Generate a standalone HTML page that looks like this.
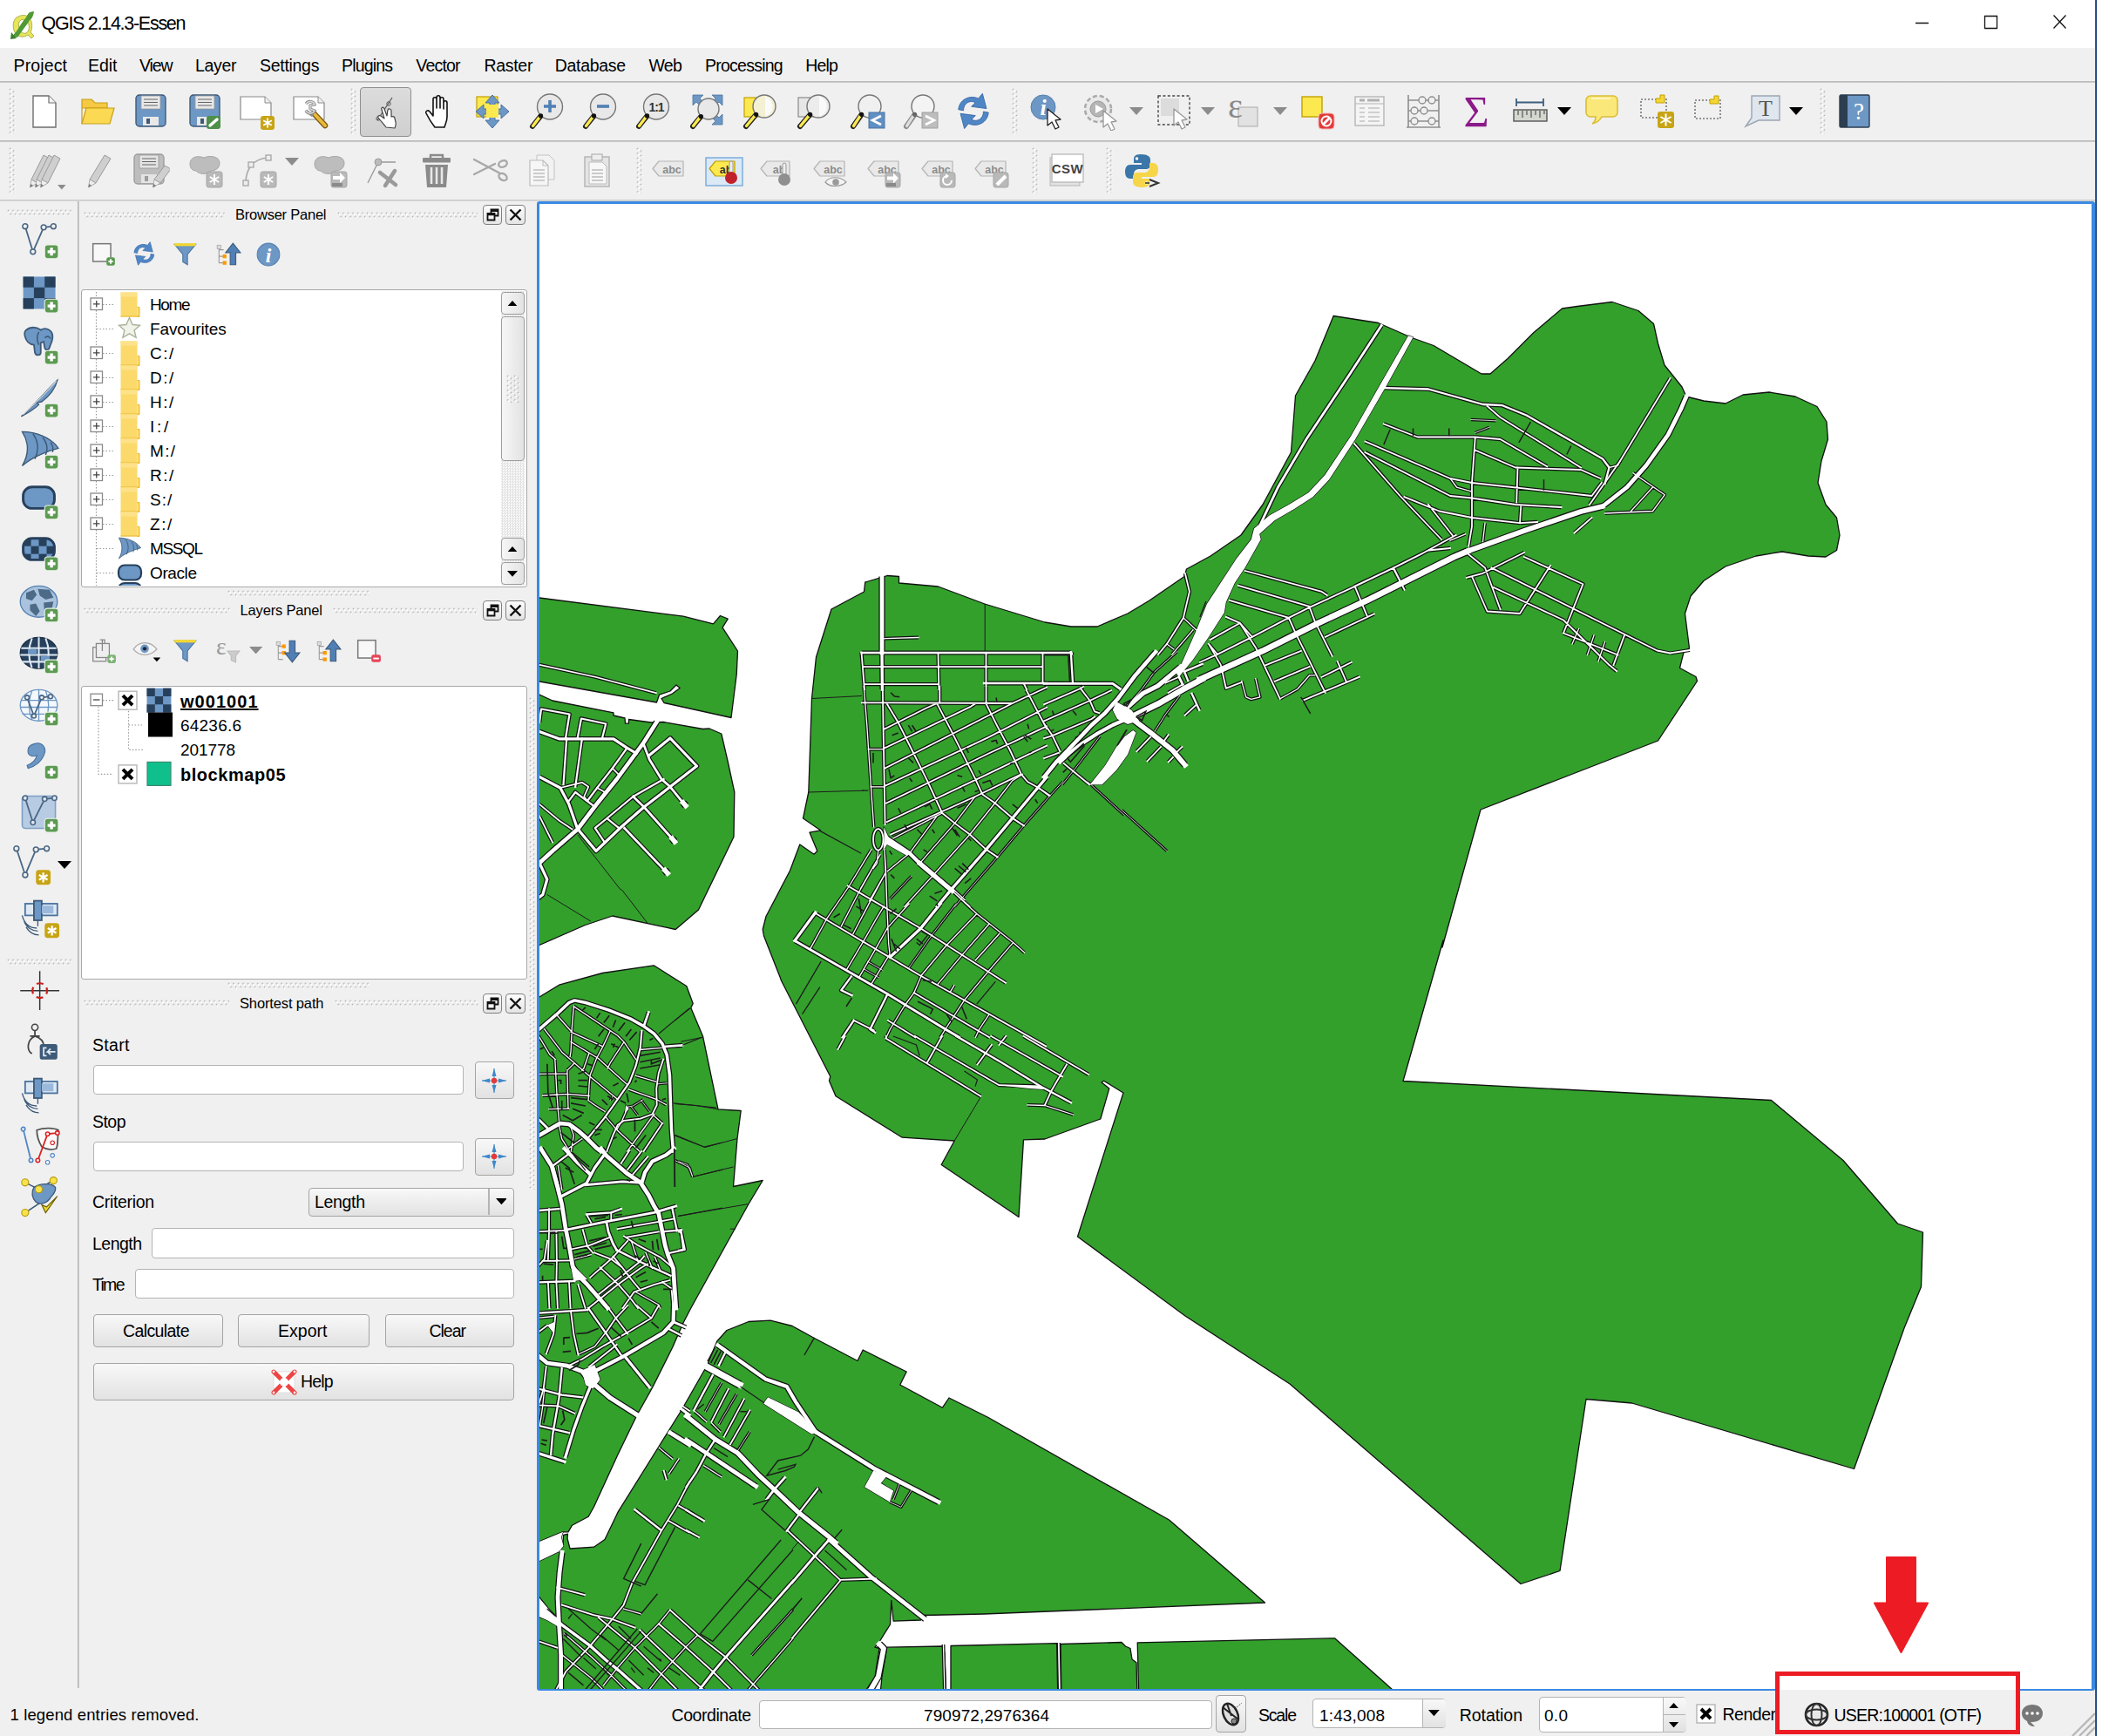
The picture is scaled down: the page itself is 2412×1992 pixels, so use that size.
<!DOCTYPE html>
<html><head><meta charset="utf-8"><title>QGIS 2.14.3-Essen</title><style>
html,body{margin:0;padding:0}
body{width:2412px;height:1992px;overflow:hidden;background:#fff;position:relative;font-family:"Liberation Sans",sans-serif;color:#000}
.t{position:absolute;white-space:nowrap}
.b{position:absolute}
.a{position:absolute;display:block}
.hv{position:absolute;width:8px;background:radial-gradient(circle at 2.6px 2.6px,#fff 0.9px,transparent 1.4px) 0 0/8px 5.5px,radial-gradient(circle at 6.6px 5.3px,#fff 0.9px,transparent 1.4px) 0 0/8px 5.5px,radial-gradient(circle at 1.8px 1.8px,#b4b4b4 1px,transparent 1.5px) 0 0/8px 5.5px,radial-gradient(circle at 5.8px 4.5px,#b4b4b4 1px,transparent 1.5px) 0 0/8px 5.5px}
.hh{position:absolute;height:8px;background:radial-gradient(circle at 2.6px 2.6px,#fff 0.9px,transparent 1.4px) 0 0/5.5px 8px,radial-gradient(circle at 5.3px 6.6px,#fff 0.9px,transparent 1.4px) 0 0/5.5px 8px,radial-gradient(circle at 1.8px 1.8px,#b4b4b4 1px,transparent 1.5px) 0 0/5.5px 8px,radial-gradient(circle at 4.5px 5.8px,#b4b4b4 1px,transparent 1.5px) 0 0/5.5px 8px}
#win{position:absolute;left:0;top:0;width:2404px;height:1992px;background:#f0f0f0}
#canvas{position:absolute;left:616px;top:230.8px;width:1788px;height:1709.4px;box-sizing:border-box;border:3.7px solid #3a8ae2;border-right-width:4.3px;border-bottom-width:2.8px;border-radius:3px;background:#fff;overflow:hidden}
#winedge{position:absolute;left:2403.5px;top:0;width:2px;height:1992px;background:linear-gradient(90deg,#2f6fc4,#0c2d5e)}
</style></head><body>
<div id="win"></div>
<div class="b" style="left:0.0px;top:0.0px;width:2404.0px;height:55.0px;background:#fff"></div>
<svg class="a" style="left:5.0px;top:5.0px" width="44.0" height="44.0" viewBox="-2 -2 44 44"><path d="M8 34L26 8l6 -1 -2 6L12 36z" fill="#5d9b3a"/><path d="M14 12c-6 2-8 12-3 20 4 4 10 4 14 1l4 4 3-3-4-4c3-6 2-14-3-18-3-2-7-2-11 0zm3 4c4-2 8 0 9 5 1 4 0 8-3 10-3 1-7-1-8-5-1-4-1-8 2-10z" fill="#e9e55a" stroke="#9aa03a" stroke-width=".8"/><path d="M9 33L27 7l5-1-2 6L13 36z" fill="#4f9a36"/><path d="M6 30l6 7-7 1z" fill="#3c7f2c"/></svg>
<div class="t" style="left:47.5px;top:14.0px;height:27px;line-height:27px;font-size:21.50px;letter-spacing:-1.277px;color:#000;">QGIS 2.14.3-Essen</div>
<svg class="a" style="left:2190px;top:10px" width="200" height="36" viewBox="2190 10 200 36"><path d="M2198 26.5h15M2277.5 18.5h14v14h-14zM2356.5 17.5l14 15M2370.5 17.5l-14 15" stroke="#111" stroke-width="1.3" fill="none"/></svg>
<div class="b" style="left:0.0px;top:55.0px;width:2404.0px;height:38.0px;background:#f0f0f0"></div>
<div class="t" style="left:15.5px;top:62.5px;height:25px;line-height:25px;font-size:19.50px;letter-spacing:0.135px;color:#000;">Project</div>
<div class="t" style="left:101.0px;top:62.5px;height:25px;line-height:25px;font-size:19.50px;letter-spacing:-0.034px;color:#000;">Edit</div>
<div class="t" style="left:160.0px;top:62.5px;height:25px;line-height:25px;font-size:19.50px;letter-spacing:-1.139px;color:#000;">View</div>
<div class="t" style="left:224.0px;top:62.5px;height:25px;line-height:25px;font-size:19.50px;letter-spacing:-0.320px;color:#000;">Layer</div>
<div class="t" style="left:298.0px;top:62.5px;height:25px;line-height:25px;font-size:19.50px;letter-spacing:-0.294px;color:#000;">Settings</div>
<div class="t" style="left:392.0px;top:62.5px;height:25px;line-height:25px;font-size:19.50px;letter-spacing:-0.826px;color:#000;">Plugins</div>
<div class="t" style="left:477.3px;top:62.5px;height:25px;line-height:25px;font-size:19.50px;letter-spacing:-0.797px;color:#000;">Vector</div>
<div class="t" style="left:555.4px;top:62.5px;height:25px;line-height:25px;font-size:19.50px;letter-spacing:-0.287px;color:#000;">Raster</div>
<div class="t" style="left:636.8px;top:62.5px;height:25px;line-height:25px;font-size:19.50px;letter-spacing:-0.325px;color:#000;">Database</div>
<div class="t" style="left:744.5px;top:62.5px;height:25px;line-height:25px;font-size:19.50px;letter-spacing:-0.722px;color:#000;">Web</div>
<div class="t" style="left:809.0px;top:62.5px;height:25px;line-height:25px;font-size:19.50px;letter-spacing:-0.752px;color:#000;">Processing</div>
<div class="t" style="left:924.3px;top:62.5px;height:25px;line-height:25px;font-size:19.50px;letter-spacing:-0.869px;color:#000;">Help</div>
<div class="b" style="left:0.0px;top:93.0px;width:2404.0px;height:2.0px;background:linear-gradient(#b6b6b6,#cfcfcf)"></div>
<div class="b" style="left:0.0px;top:161.0px;width:2404.0px;height:2.0px;background:linear-gradient(#b6b6b6,#cfcfcf)"></div>
<div class="b" style="left:0.0px;top:229.0px;width:2404.0px;height:2.0px;background:linear-gradient(#c6c6c6,#dcdcdc)"></div>
<div class="hv" style="left:10.0px;top:101.0px;height:53.0px"></div>
<div class="hv" style="left:402.0px;top:101.0px;height:53.0px"></div>
<div class="hv" style="left:1161.0px;top:101.0px;height:53.0px"></div>
<div class="hv" style="left:2088.0px;top:101.0px;height:53.0px"></div>
<div class="hv" style="left:10.0px;top:169.0px;height:53.0px"></div>
<div class="hv" style="left:730.0px;top:169.0px;height:53.0px"></div>
<div class="hv" style="left:1183.6px;top:169.0px;height:53.0px"></div>
<div class="hv" style="left:1268.5px;top:169.0px;height:53.0px"></div>
<div class="b" style="left:413.0px;top:100.0px;width:59.0px;height:57.0px;background:linear-gradient(#dcdcdc,#cfcfcf);border:1.5px solid #8f8f8f;border-radius:4px;box-sizing:border-box"></div>
<svg class="a" style="left:28.5px;top:106.0px" width="44.0" height="44.0" viewBox="-2 -2 44 44"><path d="M7 2h18l8 8v28H7z" fill="#fff" stroke="#6e6e6e" stroke-width="1.4"/><path d="M25 2v8h8" fill="#f4f4f4" stroke="#6e6e6e" stroke-width="1.2"/></svg>
<svg class="a" style="left:90.0px;top:106.0px" width="44.0" height="44.0" viewBox="-2 -2 44 44"><path d="M2 34V6h11l4 4h14v6H2" fill="#f5c944" stroke="#c89f18" stroke-width="1.2"/><path d="M2 34l5-18h32l-5 18z" fill="#fcd953" stroke="#c89f18" stroke-width="1.2"/></svg>
<svg class="a" style="left:151.0px;top:106.0px" width="44.0" height="44.0" viewBox="-2 -2 44 44"><rect x="3" y="1" width="34" height="36" rx="4" fill="#6d97c4" stroke="#3d5a78" stroke-width="1.4"/><rect x="9" y="2" width="22" height="15" fill="#e8e8e8" stroke="#999" stroke-width=".8"/><path d="M12 6h16M12 9.5h16M12 13h16" stroke="#666" stroke-width="1.2"/><rect x="11" y="26" width="18" height="10" fill="#e8e8e8"/><rect x="15" y="28" width="4" height="6" fill="#3d5a78"/></svg>
<svg class="a" style="left:213.0px;top:106.0px" width="44.0" height="44.0" viewBox="-2 -2 44 44"><rect x="3" y="1" width="34" height="36" rx="4" fill="#6d97c4" stroke="#3d5a78" stroke-width="1.4"/><rect x="9" y="2" width="22" height="15" fill="#e8e8e8" stroke="#999" stroke-width=".8"/><path d="M12 6h16M12 9.5h16M12 13h16" stroke="#666" stroke-width="1.2"/><rect x="11" y="26" width="18" height="10" fill="#e8e8e8"/><rect x="15" y="28" width="4" height="6" fill="#3d5a78"/><rect x="22" y="25" width="16" height="15" rx="3" fill="#4f8f4a"/><path d="M26 36l8-7" stroke="#fff" stroke-width="3.4" stroke-linecap="round"/></svg>
<svg class="a" style="left:273.0px;top:106.0px" width="44.0" height="44.0" viewBox="-2 -2 44 44"><path d="M1 3h28l7 7v19H1z" fill="#fff" stroke="#8a8a8a" stroke-width="1.2"/><path d="M29 3v7h7" fill="#f0f0f0" stroke="#8a8a8a"/><rect x="24" y="25" width="16" height="16" rx="3" fill="#c8a415"/><path d="M32 27.5v11M27.215 30.25l9.57 5.5M27.215 35.75l9.57 -5.5" stroke="#fff" stroke-width="2"/></svg>
<svg class="a" style="left:334.0px;top:106.0px" width="44.0" height="44.0" viewBox="-2 -2 44 44"><path d="M1 3h28l7 7v19H1z" fill="#fff" stroke="#8a8a8a" stroke-width="1.2"/><path d="M29 3v7h7" fill="#f0f0f0" stroke="#8a8a8a"/><path d="M24 22l13 14" stroke="#7a5a10" stroke-width="6.5" stroke-linecap="round"/><path d="M25 23l12 13" stroke="#e9b93a" stroke-width="4" stroke-linecap="round"/><path d="M15 11c3-4 9-3 10 1l-5 1 0 4 5 2c-2 4-8 4-10 0l8 6" fill="none" stroke="#888" stroke-width="3.2"/><path d="M15 11c3-4 9-3 10 1l-5 1 0 4 5 2c-2 4-8 4-10 0" fill="none" stroke="#ddd" stroke-width="1.4"/></svg>
<svg class="a" style="left:420.5px;top:106.0px" width="44.0" height="44.0" viewBox="-2 -2 44 44"><path d="M10 30L27 4" stroke="#555" stroke-width="1.2"/><circle cx="11" cy="28" r="2.2" fill="none" stroke="#555"/><circle cx="23" cy="11" r="2.2" fill="none" stroke="#555"/><path d="M20 38c-3-4-7-8-9-11-1-2 1-3 3-2l4 3-3-10c-1-3 2-4 3-1l3 8 1-7c1-2 4-1 4 1v7c2-1 4 0 4 2l1 4c1 3 0 5-1 7z" fill="#fff" stroke="#444" stroke-width="1.2" stroke-linejoin="round"/></svg>
<svg class="a" style="left:482.5px;top:106.0px" width="44.0" height="44.0" viewBox="-2 -2 44 44"><path d="M14 38c-4-5-8-12-10-16-1-3 2-4 4-2l4 5V6c0-3 4-3 4 0v10V4c0-3 4-3 4 0v12V6c0-3 4-3 4 0v11V10c0-3 4-3 4 0v16c0 5-2 8-3 12z" fill="#fff" stroke="#111" stroke-width="1.6" stroke-linejoin="round"/></svg>
<svg class="a" style="left:543.0px;top:106.0px" width="44.0" height="44.0" viewBox="-2 -2 44 44"><rect x="2" y="3" width="24" height="23" fill="#fce94f" stroke="#c4a000" stroke-width="1.2"/><path d="M20 1l8 9h-5v7h7v-5l9 8-9 8v-5h-7v7h5l-8 9-8-9h5v-7h-7v5l-9-8 9-8v5h7v-7h-5z" fill="#6d97c4" stroke="#4a739f" stroke-width="1"/><rect x="13" y="12" width="14" height="15" fill="#fce94f"/></svg>
<svg class="a" style="left:604.0px;top:106.0px" width="44.0" height="44.0" viewBox="-2 -2 44 44"><path d="M14.85 24.65L5 37" stroke="#222" stroke-width="6" stroke-linecap="round"/><path d="M12.85 26.65L5.5 36.5" stroke="#fce94f" stroke-width="3.4" stroke-linecap="round"/><circle cx="25" cy="14.5" r="14.5" fill="#e8e8e8" stroke="#777" stroke-width="1.4"/><circle cx="14.56" cy="24.94" r="2.6" fill="#111"/><path d="M18 14h14M25 7v14" stroke="#4f7fb5" stroke-width="3.6"/></svg>
<svg class="a" style="left:665.0px;top:106.0px" width="44.0" height="44.0" viewBox="-2 -2 44 44"><path d="M14.85 24.65L5 37" stroke="#222" stroke-width="6" stroke-linecap="round"/><path d="M12.85 26.65L5.5 36.5" stroke="#fce94f" stroke-width="3.4" stroke-linecap="round"/><circle cx="25" cy="14.5" r="14.5" fill="#e8e8e8" stroke="#777" stroke-width="1.4"/><circle cx="14.56" cy="24.94" r="2.6" fill="#111"/><path d="M18 14h14" stroke="#4f7fb5" stroke-width="3.6"/></svg>
<svg class="a" style="left:726.0px;top:106.0px" width="44.0" height="44.0" viewBox="-2 -2 44 44"><path d="M14.85 24.65L5 37" stroke="#222" stroke-width="6" stroke-linecap="round"/><path d="M12.85 26.65L5.5 36.5" stroke="#fce94f" stroke-width="3.4" stroke-linecap="round"/><circle cx="25" cy="14.5" r="14.5" fill="#e8e8e8" stroke="#777" stroke-width="1.4"/><circle cx="14.56" cy="24.94" r="2.6" fill="#111"/><text x="25" y="19.5" font-family="Liberation Sans,sans-serif" font-weight="bold" font-size="14" text-anchor="middle" fill="#333" letter-spacing="-1">1:1</text></svg>
<svg class="a" style="left:788.0px;top:106.0px" width="44.0" height="44.0" viewBox="-2 -2 44 44"><path d="M5 1h12l-4 4 6 6-4 4-6-6-4 4zM39 1v12l-4-4-6 6-4-4 6-6-4-4zM39 35h-12l4-4-6-6 4-4 6 6 4-4zM5 35" fill="#6d97c4" stroke="#4a739f" stroke-width=".8"/><path d="M14.6 25.4L5 37" stroke="#222" stroke-width="6" stroke-linecap="round"/><path d="M12.6 27.4L5.5 36.5" stroke="#fce94f" stroke-width="3.4" stroke-linecap="round"/><circle cx="23" cy="17" r="12" fill="#e8e8e8" stroke="#777" stroke-width="1.4"/><circle cx="14.36" cy="25.64" r="2.6" fill="#111"/></svg>
<svg class="a" style="left:849.0px;top:106.0px" width="44.0" height="44.0" viewBox="-2 -2 44 44"><rect x="3" y="4" width="17" height="22" fill="#fce94f" stroke="#c4a000" stroke-width="1.2"/><path d="M16.9 23.1L5 37" stroke="#222" stroke-width="6" stroke-linecap="round"/><path d="M14.9 25.1L5.5 36.5" stroke="#fce94f" stroke-width="3.4" stroke-linecap="round"/><circle cx="26" cy="14" r="13" fill="#f3f0d4" stroke="#777" stroke-width="1.4"/><circle cx="16.64" cy="23.36" r="2.6" fill="#111"/><path d="M27 2.5a12 12 0 0 1 0 23z" fill="#fafafa"/></svg>
<svg class="a" style="left:910.5px;top:106.0px" width="44.0" height="44.0" viewBox="-2 -2 44 44"><rect x="3" y="4" width="17" height="22" fill="#e6e6e6" stroke="#8a8a8a" stroke-width="1.2"/><path d="M16.9 23.1L5 37" stroke="#222" stroke-width="6" stroke-linecap="round"/><path d="M14.9 25.1L5.5 36.5" stroke="#fce94f" stroke-width="3.4" stroke-linecap="round"/><circle cx="26" cy="14" r="13" fill="#ececec" stroke="#777" stroke-width="1.4"/><circle cx="16.64" cy="23.36" r="2.6" fill="#111"/><path d="M27 2.5a12 12 0 0 1 0 23z" fill="#fafafa"/></svg>
<svg class="a" style="left:972.0px;top:106.0px" width="44.0" height="44.0" viewBox="-2 -2 44 44"><path d="M14.9 23.1L5 37" stroke="#222" stroke-width="6" stroke-linecap="round"/><path d="M12.9 25.1L5.5 36.5" stroke="#fce94f" stroke-width="3.4" stroke-linecap="round"/><circle cx="24" cy="14" r="13" fill="#f0f0f0" stroke="#777" stroke-width="1.4"/><circle cx="14.64" cy="23.36" r="2.6" fill="#111"/><rect x="23" y="21" width="18" height="18" fill="#5f8fc4" stroke="#4a739f"/><path d="M37 25l-10 5 10 5" fill="none" stroke="#fff" stroke-width="2.6"/></svg>
<svg class="a" style="left:1033.0px;top:106.0px" width="44.0" height="44.0" viewBox="-2 -2 44 44"><path d="M14.9 23.1L5 37" stroke="#888" stroke-width="6" stroke-linecap="round"/><path d="M12.9 25.1L5.5 36.5" stroke="#ddd" stroke-width="3.4" stroke-linecap="round"/><circle cx="24" cy="14" r="13" fill="#f4f4f4" stroke="#777" stroke-width="1.4"/><circle cx="14.64" cy="23.36" r="2.6" fill="#666"/><rect x="23" y="21" width="18" height="18" fill="#bdbdbd" stroke="#a0a0a0"/><path d="M27 25l10 5-10 5" fill="none" stroke="#fff" stroke-width="2.6"/></svg>
<svg class="a" style="left:1095.0px;top:106.0px" width="44.0" height="44.0" viewBox="-2 -2 44 44"><g transform="translate(-3,-3) scale(1.15)"><path d="M5 18C6 8 16 3 25 7l4-5 4 15-15-2 4-4C16 8 10 12 10 19z" fill="#4f86c6" stroke="#3a6aa5" stroke-width=".8"/><path d="M35 21C34 31 24 36 15 32l-4 5-4-15 15 2-4 4c6 3 12-1 12-8z" fill="#4f86c6" stroke="#3a6aa5" stroke-width=".8"/></g></svg>
<svg class="a" style="left:1180.0px;top:106.0px" width="44.0" height="44.0" viewBox="-2 -2 44 44"><circle cx="15" cy="15" r="14" fill="#6d97c4" stroke="#5580b0"/><text x="15" y="24" font-family="Liberation Serif,serif" font-style="italic" font-weight="bold" font-size="26" text-anchor="middle" fill="#fff">i</text><path d="M20 17l0 19 5-4 4 8 4-2-4-8 6-1z" fill="#fff" stroke="#222" stroke-width="1.3" stroke-linejoin="round"/></svg>
<svg class="a" style="left:1241.0px;top:106.0px" width="44.0" height="44.0" viewBox="-2 -2 44 44"><circle cx="17" cy="17" r="15" fill="#e9e9e9" stroke="#aaa" stroke-width="2.5" stroke-dasharray="5 3"/><circle cx="17" cy="17" r="9" fill="#b5b5b5" stroke="#999"/><path d="M14 12l9 5-9 5z" fill="#fff"/><path d="M23 19l0 19 5-4 4 8 4-2-4-8 6-1z" fill="#fff" stroke="#999" stroke-width="1.3" stroke-linejoin="round"/></svg>
<svg class="a" style="left:1324.5px;top:106.0px" width="44.0" height="44.0" viewBox="-2 -2 44 44"><rect x="2" y="2" width="36" height="33" fill="none" stroke="#444" stroke-width="1.4" stroke-dasharray="3 2.4"/><rect x="5" y="5" width="21" height="20" fill="#dcdcdc"/><path d="M20 17l0 19 5-4 4 8 4-2-4-8 6-1z" fill="#fff" stroke="#999" stroke-width="1.3" stroke-linejoin="round"/></svg>
<svg class="a" style="left:1407.0px;top:106.0px" width="44.0" height="44.0" viewBox="-2 -2 44 44"><rect x="12" y="15" width="22" height="22" fill="#e2e2e2" stroke="#aaa"/><text x="0" y="27" font-family="Liberation Serif,serif" font-size="40" fill="#8a8a8a">ε</text></svg>
<svg class="a" style="left:1490.0px;top:106.0px" width="44.0" height="44.0" viewBox="-2 -2 44 44"><rect x="2" y="3" width="23" height="23" fill="#fce94f" stroke="#c4a000" stroke-width="1.4"/><rect x="21" y="22" width="18" height="18" rx="4" fill="#e23a3a" stroke="#f2b5b5"/><circle cx="30" cy="31" r="5.5" fill="none" stroke="#fff" stroke-width="2"/><path d="M26 35l8-8" stroke="#fff" stroke-width="3"/></svg>
<svg class="a" style="left:1550.0px;top:106.0px" width="44.0" height="44.0" viewBox="-2 -2 44 44"><rect x="3" y="3" width="33" height="33" fill="#f4f4f4" stroke="#b5b5b5" stroke-width="1.4"/><path d="M3 11h33" stroke="#b5b5b5"/><path d="M8 7h6M17 7h14" stroke="#b0b0b0" stroke-width="3"/><path d="M8 16h6M18 16h13M8 21h6M18 21h13M8 26h6M18 26h13M8 31h6M18 31h13" stroke="#c2c2c2" stroke-width="1.6"/></svg>
<svg class="a" style="left:1611.0px;top:106.0px" width="44.0" height="44.0" viewBox="-2 -2 44 44"><path d="M3 1v37M38 1v37M1 38h39M3 7h35M3 19h35M3 31h35" stroke="#8e8e8e" stroke-width="1.6" fill="none"/><g fill="#f0f0f0" stroke="#8e8e8e" stroke-width="1.4"><circle cx="19" cy="7" r="4"/><circle cx="30" cy="7" r="4"/><circle cx="10" cy="19" r="4"/><circle cx="21" cy="19" r="4"/><circle cx="10" cy="31" r="4"/><circle cx="30" cy="31" r="4"/></g></svg>
<svg class="a" style="left:1671.5px;top:106.0px" width="44.0" height="44.0" viewBox="-2 -2 44 44"><text x="20" y="37" font-family="Liberation Serif,serif" font-size="50" text-anchor="middle" fill="#8b1a89">Σ</text></svg>
<svg class="a" style="left:1733.5px;top:106.0px" width="44.0" height="44.0" viewBox="-2 -2 44 44"><path d="M4 5v9M35 5v9M4 9.5h31" stroke="#3b5f80" stroke-width="1.8"/><rect x="1" y="18" width="38" height="13" fill="#d3d7cf" stroke="#555" stroke-width="1.4"/><path d="M6 19v5M11 19v8M16 19v5M21 19v8M26 19v5M31 19v8M36 19v4" stroke="#555" stroke-width="1.2"/></svg>
<svg class="a" style="left:1816.0px;top:106.0px" width="44.0" height="44.0" viewBox="-2 -2 44 44"><path d="M7 2h26a5 5 0 0 1 5 5v14a5 5 0 0 1-5 5H20c-2 4-6 7-11 8 3-2 4-5 4-8H7a5 5 0 0 1-5-5V7a5 5 0 0 1 5-5z" fill="#fbe87a" stroke="#d9bd38" stroke-width="1.6"/><path d="M8 5h22" stroke="#fff6c0" stroke-width="2"/></svg>
<svg class="a" style="left:1879.5px;top:106.0px" width="44.0" height="44.0" viewBox="-2 -2 44 44"><rect x="1" y="6" width="29" height="21" fill="none" stroke="#777" stroke-width="1.6" stroke-dasharray="2 2"/><path d="M18 5h5v-4h5v9h-10z" fill="#f4d734" stroke="#c4a000"/><rect x="20" y="20" width="19" height="19" rx="3" fill="#c8a415"/><path d="M29.5 22.5v14M23.41 26l12.18 7M23.41 33l12.18 -7" stroke="#fff" stroke-width="2"/></svg>
<svg class="a" style="left:1937.5px;top:106.0px" width="44.0" height="44.0" viewBox="-2 -2 44 44"><rect x="5" y="7" width="29" height="21" fill="none" stroke="#777" stroke-width="1.6" stroke-dasharray="2 2"/><path d="M22 6h5v-4h5v9h-10z" fill="#f4d734" stroke="#c4a000"/></svg>
<svg class="a" style="left:2000.0px;top:106.0px" width="44.0" height="44.0" viewBox="-2 -2 44 44"><path d="M8 2h32v28H16L1 37l7-10z" fill="#dfe6ee" stroke="#9aa5b1" stroke-width="1.4"/><text x="24" y="25" font-family="Liberation Serif,serif" font-size="26" text-anchor="middle" fill="#555">T</text></svg>
<svg class="a" style="left:2106.0px;top:106.0px" width="44.0" height="44.0" viewBox="-2 -2 44 44"><rect x="3" y="1" width="34" height="37" rx="1.5" fill="#6d97c4" stroke="#2c3e50" stroke-width="1.4"/><rect x="3" y="1" width="9" height="37" fill="#2c3e50"/><text x="25" y="29" font-family="Liberation Serif,serif" font-size="27" text-anchor="middle" fill="#fff">?</text></svg>
<svg class="a" style="left:1295.5px;top:122.5px" width="16.0" height="9.0" viewBox="0 0 16 9"><path d="M0 0h16L8 9z" fill="#8c8c8c"/></svg>
<svg class="a" style="left:1377.5px;top:122.5px" width="16.0" height="9.0" viewBox="0 0 16 9"><path d="M0 0h16L8 9z" fill="#8c8c8c"/></svg>
<svg class="a" style="left:1460.5px;top:122.5px" width="16.0" height="9.0" viewBox="0 0 16 9"><path d="M0 0h16L8 9z" fill="#8c8c8c"/></svg>
<svg class="a" style="left:1787.0px;top:122.5px" width="16.0" height="9.0" viewBox="0 0 16 9"><path d="M0 0h16L8 9z" fill="#000"/></svg>
<svg class="a" style="left:2053.0px;top:122.5px" width="16.0" height="9.0" viewBox="0 0 16 9"><path d="M0 0h16L8 9z" fill="#000"/></svg>
<svg class="a" style="left:30.0px;top:173.5px" width="44.0" height="44.0" viewBox="-2 -2 44 44"><path d="M4 30L18 2l7 4L11 34z" fill="#cfcfcf" stroke="#9a9a9a" stroke-width="1"/><path d="M4 30l-1.5 9 8.5-5z" fill="#eee" stroke="#9a9a9a" stroke-width=".8"/><path d="M3.2 35l-.7 4 3.5-2z" fill="#777"/><path d="M10 30L24 2l7 4L17 34z" fill="#cfcfcf" stroke="#9a9a9a" stroke-width="1"/><path d="M10 30l-1.5 9 8.5-5z" fill="#eee" stroke="#9a9a9a" stroke-width=".8"/><path d="M9.2 35l-.7 4 3.5-2z" fill="#777"/><path d="M16 30L30 2l7 4L23 34z" fill="#cfcfcf" stroke="#9a9a9a" stroke-width="1"/><path d="M16 30l-1.5 9 8.5-5z" fill="#eee" stroke="#9a9a9a" stroke-width=".8"/><path d="M15.2 35l-.7 4 3.5-2z" fill="#777"/></svg>
<svg class="a" style="left:89.0px;top:173.5px" width="44.0" height="44.0" viewBox="-2 -2 44 44"><path d="M12 30L29 2l7 4L19 34z" fill="#cfcfcf" stroke="#9a9a9a" stroke-width="1"/><path d="M12 30l-1.5 9 8.5-5z" fill="#eee" stroke="#9a9a9a" stroke-width=".8"/><path d="M11.2 35l-.7 4 3.5-2z" fill="#777"/></svg>
<svg class="a" style="left:151.0px;top:173.5px" width="44.0" height="44.0" viewBox="-2 -2 44 44"><rect x="1" y="1" width="34" height="34" rx="4" fill="#bdbdbd" stroke="#9d9d9d" stroke-width="1.4"/><rect x="7" y="2" width="22" height="15" fill="#e4e4e4" stroke="#999" stroke-width=".8"/><path d="M10 6h16M10 9.5h16M10 13h16" stroke="#666" stroke-width="1.2"/><rect x="9" y="24" width="18" height="10" fill="#e4e4e4"/><rect x="13" y="26" width="4" height="6" fill="#9d9d9d"/><path d="M24 30L36 14l7 4L31 34z" fill="#cfcfcf" stroke="#9a9a9a" stroke-width="1"/><path d="M24 30l-1.5 9 8.5-5z" fill="#eee" stroke="#9a9a9a" stroke-width=".8"/><path d="M23.2 35l-.7 4 3.5-2z" fill="#777"/></svg>
<svg class="a" style="left:213.5px;top:173.5px" width="44.0" height="44.0" viewBox="-2 -2 44 44"><path d="M2 12c0-8 9-10 16-7 6-3 18-2 18 6 0 7-6 9-10 9-4 5-14 4-17 0C4 20 2 16 2 12z" fill="#bdbdbd" stroke="#a6a6a6"/><rect x="21" y="21" width="18" height="18" rx="2.5" fill="#b9b9b9" stroke="#a5a5a5"/><path d="M30 24v12M24.78 27l10.44 6M24.78 33l10.44 -6" stroke="#fff" stroke-width="2"/></svg>
<svg class="a" style="left:275.5px;top:173.5px" width="44.0" height="44.0" viewBox="-2 -2 44 44"><path d="M4 34C4 18 12 6 30 5" fill="none" stroke="#aaa" stroke-width="1.6"/><g fill="#eee" stroke="#aaa" stroke-width="1.4"><rect x="1" y="31" width="6" height="6"/><rect x="7" y="10" width="6" height="6"/><rect x="27" y="2" width="6" height="6"/></g><rect x="21" y="21" width="18" height="18" rx="2.5" fill="#b9b9b9" stroke="#a5a5a5"/><path d="M30 24v12M24.78 27l10.44 6M24.78 33l10.44 -6" stroke="#fff" stroke-width="2"/></svg>
<svg class="a" style="left:357.0px;top:173.5px" width="44.0" height="44.0" viewBox="-2 -2 44 44"><path d="M2 12c0-8 9-10 16-7 6-3 18-2 18 6 0 7-6 9-10 9-4 5-14 4-17 0C4 20 2 16 2 12z" fill="#bdbdbd" stroke="#a6a6a6"/><rect x="21" y="21" width="18" height="18" rx="2.5" fill="#b9b9b9" stroke="#a5a5a5"/><path d="M23 26h8v-4l6 6-6 6v-4h-8z" fill="#fff"/><rect x="22" y="34" width="12" height="4" fill="#8a8a8a"/></svg>
<svg class="a" style="left:418.0px;top:173.5px" width="44.0" height="44.0" viewBox="-2 -2 44 44"><path d="M2 34L14 10h20" fill="none" stroke="#999" stroke-width="1.3"/><circle cx="14" cy="10" r="4" fill="#bbb" stroke="#999"/><path d="M16 22l18 14M33 20l-11 17" stroke="#9a9a9a" stroke-width="4.5" stroke-linecap="round"/></svg>
<svg class="a" style="left:479.0px;top:173.5px" width="44.0" height="44.0" viewBox="-2 -2 44 44"><path d="M13 5V2h14v3" fill="none" stroke="#8a8a8a" stroke-width="2.4"/><rect x="4" y="5" width="32" height="5.5" rx="1" fill="#8a8a8a"/><path d="M7 13h26l-2 26H9z" fill="#8a8a8a"/><path d="M14 16v19M20 16v19M26 16v19" stroke="#e8e8e8" stroke-width="2.6"/></svg>
<svg class="a" style="left:540.0px;top:173.5px" width="44.0" height="44.0" viewBox="-2 -2 44 44"><path d="M2 7l30 16M2 24l24-12" stroke="#a8a8a8" stroke-width="2.4" stroke-linecap="round"/><ellipse cx="35" cy="12" rx="5" ry="3.6" fill="none" stroke="#a8a8a8" stroke-width="2.4" transform="rotate(-25 35 12)"/><ellipse cx="35" cy="27" rx="5" ry="3.6" fill="none" stroke="#a8a8a8" stroke-width="2.4" transform="rotate(35 35 27)"/></svg>
<svg class="a" style="left:600.0px;top:173.5px" width="44.0" height="44.0" viewBox="-2 -2 44 44"><path d="M14 2h14l6 6v22H14z" fill="#f2f2f2" stroke="#c2c2c2"/><path d="M6 8h15l6 6v23H6z" fill="#f6f6f6" stroke="#bbb" stroke-width="1.2"/><path d="M21 8v6h6" fill="none" stroke="#bbb"/><path d="M10 19h13M10 23h13M10 27h13M10 31h13" stroke="#c0c0c0" stroke-width="1.4"/></svg>
<svg class="a" style="left:662.5px;top:173.5px" width="44.0" height="44.0" viewBox="-2 -2 44 44"><rect x="6" y="4" width="28" height="34" fill="#e4e4e4" stroke="#b2b2b2" stroke-width="1.4"/><rect x="14" y="1" width="12" height="7" fill="#eee" stroke="#b2b2b2" stroke-width="1.2"/><path d="M11 10h15l5 5v20H11z" fill="#f7f7f7" stroke="#bbb"/><path d="M14 19h13M14 23h13M14 27h13M14 31h13" stroke="#bcbcbc" stroke-width="1.4"/></svg>
<svg class="a" style="left:746.0px;top:173.5px" width="44.0" height="44.0" viewBox="-2 -2 44 44"><g transform="translate(0,6)"><path d="M1 11.5L8 3h28v17H8z" fill="#e9e9e9" stroke="#b5b5b5" stroke-width="1.2" stroke-linejoin="round"/><text x="23" y="16.5" font-family="Liberation Sans,sans-serif" font-weight="bold" font-size="12.5" text-anchor="middle" fill="#8c8c8c">abc</text></g></svg>
<svg class="a" style="left:809.0px;top:173.5px" width="44.0" height="44.0" viewBox="-2 -2 44 44"><rect x="-1" y="5" width="42" height="32" fill="#dbe9f7" stroke="#6ea3d8" stroke-width="1.3"/><g transform="translate(2,6)"><path d="M1 11.5L8 3h22v17H8z" fill="#fce94f" stroke="#c4a000" stroke-width="1.2" stroke-linejoin="round"/><text x="20" y="16.5" font-family="Liberation Sans,sans-serif" font-weight="bold" font-size="12.5" text-anchor="middle" fill="#333">ab</text></g><path d="M26 24v-13a2 2 0 0 1 4 0v13" fill="#eee" stroke="#999" stroke-width="1"/><circle cx="28" cy="28" r="7" fill="#c0212b"/></svg>
<svg class="a" style="left:870.0px;top:173.5px" width="44.0" height="44.0" viewBox="-2 -2 44 44"><g transform="translate(0,6)"><path d="M1 11.5L8 3h26v17H8z" fill="#e9e9e9" stroke="#b5b5b5" stroke-width="1.2" stroke-linejoin="round"/><text x="22" y="16.5" font-family="Liberation Sans,sans-serif" font-weight="bold" font-size="12.5" text-anchor="middle" fill="#8c8c8c">ab</text></g><path d="M26 26v-13a2 2 0 0 1 4 0v13" fill="#eee" stroke="#999" stroke-width="1"/><circle cx="28" cy="30" r="7" fill="#8f8f8f"/></svg>
<svg class="a" style="left:931.0px;top:173.5px" width="44.0" height="44.0" viewBox="-2 -2 44 44"><g transform="translate(0,6)"><path d="M1 11.5L8 3h28v17H8z" fill="#e9e9e9" stroke="#b5b5b5" stroke-width="1.2" stroke-linejoin="round"/><text x="23" y="16.5" font-family="Liberation Sans,sans-serif" font-weight="bold" font-size="12.5" text-anchor="middle" fill="#8c8c8c">abc</text></g><path d="M14 33c5-7 17-7 24 0-7 6-19 6-24 0z" fill="#f4f4f4" stroke="#999" stroke-width="1.2"/><circle cx="26" cy="33" r="3.8" fill="#9a9a9a"/></svg>
<svg class="a" style="left:993.0px;top:173.5px" width="44.0" height="44.0" viewBox="-2 -2 44 44"><g transform="translate(0,6)"><path d="M1 11.5L8 3h28v17H8z" fill="#e9e9e9" stroke="#b5b5b5" stroke-width="1.2" stroke-linejoin="round"/><text x="23" y="16.5" font-family="Liberation Sans,sans-serif" font-weight="bold" font-size="12.5" text-anchor="middle" fill="#8c8c8c">abc</text></g><rect x="21" y="22" width="17" height="17" rx="2.5" fill="#b9b9b9" stroke="#a5a5a5"/><path d="M23 26.5h7v-4l6 6-6 6v-4h-7z" fill="#fff"/><rect x="22" y="34" width="11" height="4" fill="#8a8a8a"/></svg>
<svg class="a" style="left:1054.5px;top:173.5px" width="44.0" height="44.0" viewBox="-2 -2 44 44"><g transform="translate(0,6)"><path d="M1 11.5L8 3h28v17H8z" fill="#e9e9e9" stroke="#b5b5b5" stroke-width="1.2" stroke-linejoin="round"/><text x="23" y="16.5" font-family="Liberation Sans,sans-serif" font-weight="bold" font-size="12.5" text-anchor="middle" fill="#8c8c8c">abc</text></g><rect x="22" y="22" width="17" height="17" rx="2.5" fill="#b9b9b9" stroke="#a5a5a5"/><path d="M35 31a5 5 0 1 1-5-5" fill="none" stroke="#fff" stroke-width="2"/><path d="M28 23l4 3-4 3z" fill="#fff"/></svg>
<svg class="a" style="left:1115.5px;top:173.5px" width="44.0" height="44.0" viewBox="-2 -2 44 44"><g transform="translate(0,6)"><path d="M1 11.5L8 3h28v17H8z" fill="#e9e9e9" stroke="#b5b5b5" stroke-width="1.2" stroke-linejoin="round"/><text x="23" y="16.5" font-family="Liberation Sans,sans-serif" font-weight="bold" font-size="12.5" text-anchor="middle" fill="#8c8c8c">abc</text></g><rect x="22" y="22" width="17" height="17" rx="2.5" fill="#b9b9b9" stroke="#a5a5a5"/><path d="M26 36l10-10" stroke="#fff" stroke-width="4"/></svg>
<svg class="a" style="left:1201.5px;top:173.5px" width="44.0" height="44.0" viewBox="-2 -2 44 44"><rect x="1" y="5" width="34" height="32" fill="#e2e2e2" stroke="#b5b5b5"/><rect x="3" y="1" width="36" height="32" fill="#fff" stroke="#bdbdbd" stroke-width="1.4"/><text x="21" y="23" font-family="Liberation Sans,sans-serif" font-weight="bold" font-size="15" text-anchor="middle" fill="#444" letter-spacing=".5">CSW</text></svg>
<svg class="a" style="left:1287.5px;top:173.5px" width="44.0" height="44.0" viewBox="-2 -2 44 44"><path d="M19 1c-7 0-8 3-8 6v4h9v2H7c-4 0-6 3-6 8s2 8 6 8h4v-5c0-4 3-6 6-6h8c3 0 5-2 5-5V7c0-3-3-6-11-6z" fill="#3a76a8"/><circle cx="14.5" cy="6" r="1.8" fill="#fff"/><path d="M21 39c7 0 8-3 8-6v-4h-9v-2h13c4 0 6-3 6-8s-2-8-6-8h-4v5c0 4-3 6-6 6h-8c-3 0-5 2-5 5v6c0 3 3 6 11 6z" fill="#f7d548"/><circle cx="25.5" cy="34" r="1.8" fill="#fff"/><path d="M29 30l10 4-10 4" fill="none" stroke="#333" stroke-width="2"/><path d="M24 34h5" stroke="#333" stroke-width="1.6"/></svg>
<svg class="a" style="left:327.0px;top:180.5px" width="16.0" height="9.0" viewBox="0 0 16 9"><path d="M0 0h16L8 9z" fill="#8c8c8c"/></svg>
<svg class="a" style="left:66.2px;top:212.3px" width="9.6" height="5.4" viewBox="0 0 16 9"><path d="M0 0h16L8 9z" fill="#8c8c8c"/></svg>
<div class="b" style="left:89.0px;top:231.0px;width:2.0px;height:1706.0px;background:linear-gradient(90deg,#a8a8a8,#d8d8d8)"></div>
<div class="hh" style="left:8.0px;top:240.0px;width:74.0px"></div>
<div class="hh" style="left:8.0px;top:1100.0px;width:74.0px"></div>
<svg class="a" style="left:21.1px;top:253.3px" width="49.3" height="49.3" viewBox="-2 -2 44 44"><path d="M5 4L13 30L24 5L34 4" fill="none" stroke="#4a6785" stroke-width="1.6"/><circle cx="5" cy="4" r="2.6" fill="#f0f0f0" stroke="#4a6785" stroke-width="1.4"/><circle cx="13" cy="30" r="2.6" fill="#f0f0f0" stroke="#4a6785" stroke-width="1.4"/><circle cx="24" cy="5" r="2.6" fill="#f0f0f0" stroke="#4a6785" stroke-width="1.4"/><circle cx="34" cy="4" r="2.6" fill="#f0f0f0" stroke="#4a6785" stroke-width="1.4"/><rect x="25" y="23" width="14" height="14" rx="3" fill="#5c9a52" stroke="#e9f1e7" stroke-width="1"/><path d="M28 30h8M32 26v8" stroke="#fff" stroke-width="3"/></svg>
<svg class="a" style="left:21.1px;top:312.6px" width="49.3" height="49.3" viewBox="-2 -2 44 44"><rect x="3" y="2" width="33" height="33" fill="#6d97c4"/><rect x="3" y="2" width="11" height="11" fill="#26405c"/><rect x="3" y="24" width="11" height="11" fill="#26405c"/><rect x="14" y="13" width="11" height="11" fill="#26405c"/><rect x="25" y="2" width="11" height="11" fill="#26405c"/><rect x="25" y="24" width="11" height="11" fill="#26405c"/><rect x="25" y="25" width="14" height="14" rx="3" fill="#5c9a52" stroke="#e9f1e7" stroke-width="1"/><path d="M28 32h8M32 28v8" stroke="#fff" stroke-width="3"/></svg>
<svg class="a" style="left:21.1px;top:372.0px" width="49.3" height="49.3" viewBox="-2 -2 44 44"><path d="M6 4c5-4 12-3 15 0 4-3 11-1 12 5 1 5-2 9-3 13-1 3-4 3-5 0l-1-6-3 1v10c0 3-5 4-6 0l-1-8c-5 0-8-4-9-8-1-3-1-5 1-7z" fill="#6d97c4" stroke="#3d5a78" stroke-width="1.6"/><path d="M19 6c-2 4-2 9 0 13M25 12c2-2 5-2 6 1" fill="none" stroke="#3d5a78" stroke-width="1.4"/><rect x="25" y="25" width="14" height="14" rx="3" fill="#5c9a52" stroke="#e9f1e7" stroke-width="1"/><path d="M28 32h8M32 28v8" stroke="#fff" stroke-width="3"/></svg>
<svg class="a" style="left:21.1px;top:432.9px" width="49.3" height="49.3" viewBox="-2 -2 44 44"><path d="M1 38C12 30 26 12 38 1c-2 8-8 16-16 22l-5 1 2 2c-5 5-12 9-18 12z" fill="#6d97c4" stroke="#3d5a78" stroke-width="1.2"/><path d="M3 36C14 26 28 12 37 2" stroke="#dfe9f4" stroke-width="1"/><rect x="25" y="25" width="14" height="14" rx="3" fill="#5c9a52" stroke="#e9f1e7" stroke-width="1"/><path d="M28 32h8M32 28v8" stroke="#fff" stroke-width="3"/></svg>
<svg class="a" style="left:21.1px;top:492.3px" width="49.3" height="49.3" viewBox="-2 -2 44 44"><path d="M2 1c14 0 30 6 37 17-8 2-26 8-37 18 7-12 7-24 0-35z" fill="#6d97c4" stroke="#3d5a78" stroke-width="1.2"/><path d="M13 3c6 8 6 18 2 26M23 7c5 6 5 13 3 18M31 12c3 4 3 7 2 10" fill="none" stroke="#3d5a78" stroke-width="1.3"/><rect x="25" y="25" width="14" height="14" rx="3" fill="#5c9a52" stroke="#e9f1e7" stroke-width="1"/><path d="M28 32h8M32 28v8" stroke="#fff" stroke-width="3"/></svg>
<svg class="a" style="left:21.1px;top:551.7px" width="49.3" height="49.3" viewBox="-2 -2 44 44"><rect x="3" y="4" width="32" height="22" rx="9" fill="#6d97c4" stroke="#26405c" stroke-width="2.6"/><rect x="25" y="23" width="14" height="14" rx="3" fill="#5c9a52" stroke="#e9f1e7" stroke-width="1"/><path d="M28 30h8M32 26v8" stroke="#fff" stroke-width="3"/></svg>
<svg class="a" style="left:21.1px;top:611.1px" width="49.3" height="49.3" viewBox="-2 -2 44 44"><clipPath id="cpo"><rect x="3" y="4" width="32" height="22" rx="9"/></clipPath><g clip-path="url(#cpo)"><rect x="3" y="4" width="32" height="32" fill="#6d97c4"/><rect x="3" y="4" width="8" height="8" fill="#26405c"/><rect x="3" y="20" width="8" height="8" fill="#26405c"/><rect x="11" y="12" width="8" height="8" fill="#26405c"/><rect x="11" y="28" width="8" height="8" fill="#26405c"/><rect x="19" y="4" width="8" height="8" fill="#26405c"/><rect x="19" y="20" width="8" height="8" fill="#26405c"/><rect x="27" y="12" width="8" height="8" fill="#26405c"/><rect x="27" y="28" width="8" height="8" fill="#26405c"/></g><rect x="3" y="4" width="32" height="22" rx="9" fill="none" stroke="#26405c" stroke-width="2.6"/><rect x="25" y="23" width="14" height="14" rx="3" fill="#5c9a52" stroke="#e9f1e7" stroke-width="1"/><path d="M28 30h8M32 26v8" stroke="#fff" stroke-width="3"/></svg>
<svg class="a" style="left:21.1px;top:668.9px" width="49.3" height="49.3" viewBox="-2 -2 44 44"><ellipse cx="19" cy="17" rx="19" ry="16" fill="#a9c3df" stroke="#5580b0" stroke-width="1.2"/><path d="M6 8l8-3 3 5-5 6-6-2zM18 4l12 1 4 8-8 2-6-4zM10 20l6-1 4 8-4 5-6-6zM24 18l10-1-2 9-7 4z" fill="#3d5a78" opacity=".85"/><rect x="25" y="24" width="14" height="14" rx="3" fill="#5c9a52" stroke="#e9f1e7" stroke-width="1"/><path d="M28 31h8M32 27v8" stroke="#fff" stroke-width="3"/></svg>
<svg class="a" style="left:21.1px;top:728.3px" width="49.3" height="49.3" viewBox="-2 -2 44 44"><ellipse cx="19" cy="17" rx="19" ry="16" fill="#26405c" stroke="#1b2f45" stroke-width="1.2"/><path d="M1 12h36M0 19h38M2 26h34M12 2c-4 10-4 20 0 30M26 2c4 10 4 20 0 30M19 1v32" stroke="#dfe9f4" stroke-width="1.8" fill="none"/><path d="M8 13h9v5H8zM21 20h9v5h-9z" fill="#6d97c4"/><rect x="25" y="24" width="14" height="14" rx="3" fill="#5c9a52" stroke="#e9f1e7" stroke-width="1"/><path d="M28 31h8M32 27v8" stroke="#fff" stroke-width="3"/></svg>
<svg class="a" style="left:21.1px;top:787.7px" width="49.3" height="49.3" viewBox="-2 -2 44 44"><ellipse cx="19" cy="17" rx="19" ry="16" fill="#f4f8fc" stroke="#6d97c4" stroke-width="1.2"/><path d="M1 12h36M0 19h38M2 26h34M12 2c-4 10-4 20 0 30M26 2c4 10 4 20 0 30M19 1v32" stroke="#6d97c4" stroke-width="1.2" fill="none"/><path d="M7 9L14 28L22 9L31 8" fill="none" stroke="#4a6785" stroke-width="1.6"/><circle cx="7" cy="9" r="2.2" fill="#f0f0f0" stroke="#4a6785" stroke-width="1.4"/><circle cx="14" cy="28" r="2.2" fill="#f0f0f0" stroke="#4a6785" stroke-width="1.4"/><circle cx="22" cy="9" r="2.2" fill="#f0f0f0" stroke="#4a6785" stroke-width="1.4"/><circle cx="31" cy="8" r="2.2" fill="#f0f0f0" stroke="#4a6785" stroke-width="1.4"/><rect x="25" y="24" width="14" height="14" rx="3" fill="#5c9a52" stroke="#e9f1e7" stroke-width="1"/><path d="M28 31h8M32 27v8" stroke="#fff" stroke-width="3"/></svg>
<svg class="a" style="left:21.1px;top:848.4px" width="49.3" height="49.3" viewBox="-2 -2 44 44"><path d="M14 3c8-3 14 4 10 12-3 7-9 11-16 13l-1-3c5-2 9-6 10-10-6 2-10-1-9-6 0-3 3-5 6-6z" fill="#6d97c4" stroke="#4a739f"/><rect x="25" y="25" width="14" height="14" rx="3" fill="#5c9a52" stroke="#e9f1e7" stroke-width="1"/><path d="M28 32h8M32 28v8" stroke="#fff" stroke-width="3"/></svg>
<svg class="a" style="left:21.1px;top:909.4px" width="49.3" height="49.3" viewBox="-2 -2 44 44"><rect x="2" y="2" width="34" height="33" rx="3" fill="#b7cbe2" stroke="#7d9fc6" stroke-width="1.4"/><path d="M5 4L13 29L25 5L35 4" fill="none" stroke="#4a6785" stroke-width="1.6"/><circle cx="5" cy="4" r="2.4" fill="#dde7f2" stroke="#4a6785" stroke-width="1.4"/><circle cx="13" cy="29" r="2.4" fill="#dde7f2" stroke="#4a6785" stroke-width="1.4"/><circle cx="25" cy="5" r="2.4" fill="#dde7f2" stroke="#4a6785" stroke-width="1.4"/><circle cx="35" cy="4" r="2.4" fill="#dde7f2" stroke="#4a6785" stroke-width="1.4"/><rect x="25" y="25" width="14" height="14" rx="3" fill="#5c9a52" stroke="#e9f1e7" stroke-width="1"/><path d="M28 32h8M32 28v8" stroke="#fff" stroke-width="3"/></svg>
<svg class="a" style="left:11.4px;top:967.4px" width="49.3" height="49.3" viewBox="-2 -2 44 44"><path d="M5 4L14 31L25 5L36 4" fill="none" stroke="#4a6785" stroke-width="1.6"/><circle cx="5" cy="4" r="2.6" fill="#f0f0f0" stroke="#4a6785" stroke-width="1.4"/><circle cx="14" cy="31" r="2.6" fill="#f0f0f0" stroke="#4a6785" stroke-width="1.4"/><circle cx="25" cy="5" r="2.6" fill="#f0f0f0" stroke="#4a6785" stroke-width="1.4"/><circle cx="36" cy="4" r="2.6" fill="#f0f0f0" stroke="#4a6785" stroke-width="1.4"/><rect x="25" y="26" width="15" height="15" rx="3" fill="#c8a415"/><path d="M32.5 28.5v10M28.15 31l8.7 5M28.15 36l8.7 -5" stroke="#fff" stroke-width="2"/></svg>
<svg class="a" style="left:21.1px;top:1028.2px" width="49.3" height="49.3" viewBox="-2 -2 44 44"><rect x="5" y="6" width="33" height="12" fill="#dfe9f4" stroke="#4a739f" stroke-width="1.6"/><rect x="14" y="3" width="8" height="20" fill="#6d97c4" stroke="#3d5a78" stroke-width="1.6"/><rect x="22" y="8" width="12" height="8" fill="#9bb9da"/><path d="M18 23v6M4 24c2 6 8 10 14 10M6 30c3 5 8 8 13 8M2 18c2 8 7 13 15 13" fill="none" stroke="#3d5a78" stroke-width="1.2"/><rect x="25" y="26" width="15" height="15" rx="3" fill="#c8a415"/><path d="M32.5 28.5v10M28.15 31l8.7 5M28.15 36l8.7 -5" stroke="#fff" stroke-width="2"/></svg>
<svg class="a" style="left:21.1px;top:1111.9px" width="49.3" height="49.3" viewBox="-2 -2 44 44"><path d="M20 0v40M0 20h40" stroke="#333" stroke-width="1.3"/><circle cx="20" cy="20" r="7.5" fill="none" stroke="#cc1f1f" stroke-width="2" stroke-dasharray="7 4.78" stroke-dashoffset="3.5"/></svg>
<svg class="a" style="left:21.1px;top:1171.4px" width="49.3" height="49.3" viewBox="-2 -2 44 44"><circle cx="15" cy="5" r="3.2" fill="#f0f0f0" stroke="#444" stroke-width="1.4"/><path d="M15 8v6M15 14c-8 4-9 14-3 18M15 14c6 2 9 6 9 10M10 14h10" fill="none" stroke="#444" stroke-width="1.6"/><rect x="20" y="22" width="18" height="16" rx="2.5" fill="#3d5a78"/><path d="M27 26h-3v8h3M36 30h-8l3-3m-3 3l3 3" fill="none" stroke="#dfe9f4" stroke-width="1.6"/></svg>
<svg class="a" style="left:21.1px;top:1232.2px" width="49.3" height="49.3" viewBox="-2 -2 44 44"><rect x="5" y="6" width="33" height="12" fill="#dfe9f4" stroke="#4a739f" stroke-width="1.6"/><rect x="14" y="3" width="8" height="20" fill="#6d97c4" stroke="#3d5a78" stroke-width="1.6"/><rect x="22" y="8" width="12" height="8" fill="#9bb9da"/><path d="M18 23v6M4 24c2 6 8 10 14 10M6 30c3 5 8 8 13 8M2 18c2 8 7 13 15 13" fill="none" stroke="#3d5a78" stroke-width="1.2"/></svg>
<svg class="a" style="left:21.1px;top:1290.1px" width="49.3" height="49.3" viewBox="-2 -2 44 44"><path d="M17 4c8-3 18-2 22 0-1 8 0 14-2 19-6 2-12 0-15-2-3-5-5-11-5-17z" fill="#fafafa" stroke="#555" stroke-width="1.6"/><path d="M3 3L11 35" fill="none" stroke="#4f86c6" stroke-width="1.6"/><circle cx="3" cy="3" r="2" fill="#f0f0f0" stroke="#4f86c6" stroke-width="1.4"/><circle cx="11" cy="35" r="2" fill="#f0f0f0" stroke="#4f86c6" stroke-width="1.4"/><path d="M38 7L28 8L18 35" fill="none" stroke="#d22" stroke-width="1.6"/><circle cx="38" cy="7" r="2" fill="#fff" stroke="#d22" stroke-width="1.4"/><circle cx="28" cy="8" r="2" fill="#fff" stroke="#d22" stroke-width="1.4"/><circle cx="18" cy="35" r="2" fill="#fff" stroke="#d22" stroke-width="1.4"/><circle cx="33" cy="17" r="2" fill="#fff" stroke="#d22"/><circle cx="28" cy="37" r="2" fill="#fff" stroke="#4f86c6"/><circle cx="33" cy="30" r="2" fill="#fff" stroke="#4f86c6"/></svg>
<svg class="a" style="left:21.1px;top:1349.4px" width="49.3" height="49.3" viewBox="-2 -2 44 44"><path d="M5 5l14 7 14-9M19 12l4 12-18 12" fill="none" stroke="#3d5a78" stroke-width="1.4"/><path d="M14 10c6-4 18-5 22 0 1 6-4 8-6 12-4 5-10 6-14 3-4-4-5-10-2-15z" fill="#6d97c4" stroke="#3d5a78" stroke-width="1.2"/><circle cx="5" cy="5" r="3.6" fill="#f8e24a" stroke="#b59a10"/><circle cx="19" cy="12" r="3.6" fill="#f8e24a" stroke="#b59a10"/><circle cx="34" cy="3" r="3.6" fill="#f8e24a" stroke="#b59a10"/><circle cx="5" cy="36" r="3.6" fill="#f8e24a" stroke="#b59a10"/><path d="M22 28l4 8 12-17-11 11z" fill="#e9d62a" stroke="#6b5c00" stroke-width="1"/></svg>
<svg class="a" style="left:66.0px;top:987.5px" width="16.0" height="9.0" viewBox="0 0 16 9"><path d="M0 0h16L8 9z" fill="#000"/></svg>
<div class="hh" style="left:96.0px;top:242.5px;width:162.0px"></div>
<div class="hh" style="left:386.5px;top:242.5px;width:161.5px"></div>
<div class="t" style="left:270.0px;top:236.0px;height:21px;line-height:21px;font-size:16.50px;letter-spacing:-0.234px;color:#000;">Browser Panel</div>
<div class="b" style="left:553.6px;top:235.0px;width:22.5px;height:23.0px;border:1.4px solid #7f7f7f;border-radius:4px;background:linear-gradient(#fdfdfd,#e4e4e4);box-sizing:border-box"></div>
<div class="b" style="left:580.0px;top:235.0px;width:22.5px;height:23.0px;border:1.4px solid #7f7f7f;border-radius:4px;background:linear-gradient(#fdfdfd,#e4e4e4);box-sizing:border-box"></div>
<svg class="a" style="left:553.6px;top:235.0px" width="23" height="23" viewBox="0 0 23 23"><path d="M9.5 5.5h8v7h-8zM9.5 7h8" fill="none" stroke="#111" stroke-width="1.8"/><path d="M5.5 10h8v7.5h-8z" fill="#f4f4f4" stroke="#111" stroke-width="1.8"/><path d="M5.5 11.4h8" stroke="#111" stroke-width="1.8"/></svg>
<svg class="a" style="left:580.0px;top:235.0px" width="23" height="23" viewBox="0 0 23 23"><path d="M5.5 5.5l12 12M17.5 5.5l-12 12" stroke="#111" stroke-width="2.4"/></svg>
<svg class="a" style="left:103.5px;top:277.0px;overflow:visible" width="30" height="30" viewBox="-1 -1 28 28"><rect x="1.5" y="1.5" width="19" height="19" fill="#f8f8f8" stroke="#777" stroke-width="1.4"/><rect x="16" y="16" width="9" height="9" rx="2" fill="#5c9a52"/><path d="M18 20.5h5M20.5 18v5" stroke="#fff" stroke-width="1.6"/></svg>
<svg class="a" style="left:151.0px;top:277.0px;overflow:visible" width="30" height="30" viewBox="-1 -1 28 28"><g transform="scale(.62)"><g transform="translate(-3,-3) scale(1.15)"><path d="M5 18C6 8 16 3 25 7l4-5 4 15-15-2 4-4C16 8 10 12 10 19z" fill="#4f86c6" stroke="#3a6aa5" stroke-width=".8"/><path d="M35 21C34 31 24 36 15 32l-4 5-4-15 15 2-4 4c6 3 12-1 12-8z" fill="#4f86c6" stroke="#3a6aa5" stroke-width=".8"/></g></g></svg>
<svg class="a" style="left:198.0px;top:277.0px;overflow:visible" width="30" height="30" viewBox="-1 -1 28 28"><path d="M1 2h23l-9 11v11l-5-3v-8z" fill="#6d97c4" stroke="#4a739f" stroke-width="1"/><path d="M1 2.5h23" stroke="#f4d734" stroke-width="3"/></svg>
<svg class="a" style="left:247.0px;top:277.0px;overflow:visible" width="30" height="30" viewBox="-1 -1 28 28"><path d="M3 5v17M3 8h5M3 15h5M3 22h5" stroke="#999" stroke-width="1" fill="none"/><rect x="7" y="13" width="4" height="4" fill="#f90"/><rect x="7" y="20" width="4" height="4" fill="#f90"/><rect x="1" y="3" width="4" height="4" fill="#ddd" stroke="#999" stroke-width=".6"/><path d="M18 1l8 10h-5v13h-6V11h-5z" fill="#4f7fb5" stroke="#3d5a78" stroke-width="1"/></svg>
<svg class="a" style="left:293.0px;top:277.0px;overflow:visible" width="30" height="30" viewBox="-1 -1 28 28"><circle cx="13" cy="13" r="12" fill="#6d97c4" stroke="#5580b0"/><text x="13" y="21" font-family="Liberation Serif,serif" font-style="italic" font-weight="bold" font-size="22" text-anchor="middle" fill="#fff">i</text></svg>
<div class="b" style="left:92.5px;top:332.0px;width:512.0px;height:342.0px;background:#fff;border:1.5px solid #a9a9a9;border-radius:3px;box-sizing:border-box"></div>
<svg class="a" style="left:94px;top:334px" width="480" height="338" viewBox="94 334 480 338"><path d="M110.500 335V672" stroke="#9a9a9a" stroke-width="1.2" stroke-dasharray="1.5 2"/><path d="M111 349.5h19" stroke="#9a9a9a" stroke-width="1.2" stroke-dasharray="1.5 2"/><rect x="104" y="342.0" width="13.500" height="13.500" fill="#fff" stroke="#8a8a8a" stroke-width="1.3"/><path d="M107 348.8h7.500M110.750 345.0v7.500" stroke="#444" stroke-width="1.3"/><g transform="translate(138.500,335.5)"><path d="M0 0h19v28H0z" fill="#fbd96b"/><path d="M0 0h19v5H0z" fill="#fde28a"/><path d="M19 17h2.500v11H19" fill="#fbd96b" stroke="#e9b830" stroke-width="1"/><path d="M0 27.500h21" stroke="#e9b830"/></g><path d="M111 377.5h19" stroke="#9a9a9a" stroke-width="1.2" stroke-dasharray="1.5 2"/><path d="M148.500 364.5l3.600 8 8.400 .8-6.400 5.600 2 8.400-7.600-4.400-7.600 4.400 2-8.400-6.400-5.600 8.400-.8z" fill="#f1f3ea" stroke="#a9b39a" stroke-width="1.4"/><path d="M111 405.5h19" stroke="#9a9a9a" stroke-width="1.2" stroke-dasharray="1.5 2"/><rect x="104" y="398.0" width="13.500" height="13.500" fill="#fff" stroke="#8a8a8a" stroke-width="1.3"/><path d="M107 404.8h7.500M110.750 401.0v7.500" stroke="#444" stroke-width="1.3"/><g transform="translate(138.500,391.5)"><path d="M0 0h19v28H0z" fill="#fbd96b"/><path d="M0 0h19v5H0z" fill="#fde28a"/><path d="M19 17h2.500v11H19" fill="#fbd96b" stroke="#e9b830" stroke-width="1"/><path d="M0 27.500h21" stroke="#e9b830"/></g><path d="M111 433.5h19" stroke="#9a9a9a" stroke-width="1.2" stroke-dasharray="1.5 2"/><rect x="104" y="426.0" width="13.500" height="13.500" fill="#fff" stroke="#8a8a8a" stroke-width="1.3"/><path d="M107 432.8h7.500M110.750 429.0v7.500" stroke="#444" stroke-width="1.3"/><g transform="translate(138.500,419.5)"><path d="M0 0h19v28H0z" fill="#fbd96b"/><path d="M0 0h19v5H0z" fill="#fde28a"/><path d="M19 17h2.500v11H19" fill="#fbd96b" stroke="#e9b830" stroke-width="1"/><path d="M0 27.500h21" stroke="#e9b830"/></g><path d="M111 461.5h19" stroke="#9a9a9a" stroke-width="1.2" stroke-dasharray="1.5 2"/><rect x="104" y="454.0" width="13.500" height="13.500" fill="#fff" stroke="#8a8a8a" stroke-width="1.3"/><path d="M107 460.8h7.500M110.750 457.0v7.500" stroke="#444" stroke-width="1.3"/><g transform="translate(138.500,447.5)"><path d="M0 0h19v28H0z" fill="#fbd96b"/><path d="M0 0h19v5H0z" fill="#fde28a"/><path d="M19 17h2.500v11H19" fill="#fbd96b" stroke="#e9b830" stroke-width="1"/><path d="M0 27.500h21" stroke="#e9b830"/></g><path d="M111 489.5h19" stroke="#9a9a9a" stroke-width="1.2" stroke-dasharray="1.5 2"/><rect x="104" y="482.0" width="13.500" height="13.500" fill="#fff" stroke="#8a8a8a" stroke-width="1.3"/><path d="M107 488.8h7.500M110.750 485.0v7.500" stroke="#444" stroke-width="1.3"/><g transform="translate(138.500,475.5)"><path d="M0 0h19v28H0z" fill="#fbd96b"/><path d="M0 0h19v5H0z" fill="#fde28a"/><path d="M19 17h2.500v11H19" fill="#fbd96b" stroke="#e9b830" stroke-width="1"/><path d="M0 27.500h21" stroke="#e9b830"/></g><path d="M111 517.5h19" stroke="#9a9a9a" stroke-width="1.2" stroke-dasharray="1.5 2"/><rect x="104" y="510.0" width="13.500" height="13.500" fill="#fff" stroke="#8a8a8a" stroke-width="1.3"/><path d="M107 516.8h7.500M110.750 513.0v7.500" stroke="#444" stroke-width="1.3"/><g transform="translate(138.500,503.5)"><path d="M0 0h19v28H0z" fill="#fbd96b"/><path d="M0 0h19v5H0z" fill="#fde28a"/><path d="M19 17h2.500v11H19" fill="#fbd96b" stroke="#e9b830" stroke-width="1"/><path d="M0 27.500h21" stroke="#e9b830"/></g><path d="M111 545.5h19" stroke="#9a9a9a" stroke-width="1.2" stroke-dasharray="1.5 2"/><rect x="104" y="538.0" width="13.500" height="13.500" fill="#fff" stroke="#8a8a8a" stroke-width="1.3"/><path d="M107 544.8h7.500M110.750 541.0v7.500" stroke="#444" stroke-width="1.3"/><g transform="translate(138.500,531.5)"><path d="M0 0h19v28H0z" fill="#fbd96b"/><path d="M0 0h19v5H0z" fill="#fde28a"/><path d="M19 17h2.500v11H19" fill="#fbd96b" stroke="#e9b830" stroke-width="1"/><path d="M0 27.500h21" stroke="#e9b830"/></g><path d="M111 573.5h19" stroke="#9a9a9a" stroke-width="1.2" stroke-dasharray="1.5 2"/><rect x="104" y="566.0" width="13.500" height="13.500" fill="#fff" stroke="#8a8a8a" stroke-width="1.3"/><path d="M107 572.8h7.500M110.750 569.0v7.500" stroke="#444" stroke-width="1.3"/><g transform="translate(138.500,559.5)"><path d="M0 0h19v28H0z" fill="#fbd96b"/><path d="M0 0h19v5H0z" fill="#fde28a"/><path d="M19 17h2.500v11H19" fill="#fbd96b" stroke="#e9b830" stroke-width="1"/><path d="M0 27.500h21" stroke="#e9b830"/></g><path d="M111 601.5h19" stroke="#9a9a9a" stroke-width="1.2" stroke-dasharray="1.5 2"/><rect x="104" y="594.0" width="13.500" height="13.500" fill="#fff" stroke="#8a8a8a" stroke-width="1.3"/><path d="M107 600.8h7.500M110.750 597.0v7.500" stroke="#444" stroke-width="1.3"/><g transform="translate(138.500,587.5)"><path d="M0 0h19v28H0z" fill="#fbd96b"/><path d="M0 0h19v5H0z" fill="#fde28a"/><path d="M19 17h2.500v11H19" fill="#fbd96b" stroke="#e9b830" stroke-width="1"/><path d="M0 27.500h21" stroke="#e9b830"/></g><path d="M111 629.5h19" stroke="#9a9a9a" stroke-width="1.2" stroke-dasharray="1.5 2"/><g transform="translate(135,616.5) scale(.68)"><path d="M2 1c14 0 30 6 37 17-8 2-26 8-37 18 7-12 7-24 0-35z" fill="#6d97c4" stroke="#3d5a78" stroke-width="1.2"/><path d="M13 3c6 8 6 18 2 26M23 7c5 6 5 13 3 18M31 12c3 4 3 7 2 10" fill="none" stroke="#3d5a78" stroke-width="1.3"/></g><path d="M111 657.5h19" stroke="#9a9a9a" stroke-width="1.2" stroke-dasharray="1.5 2"/><rect x="136" y="648.5" width="26" height="17" rx="7" fill="#6d97c4" stroke="#26405c" stroke-width="2.2"/><rect x="136" y="669" width="26" height="17" rx="7" fill="#6d97c4" stroke="#26405c" stroke-width="2.2"/></svg>
<div class="t" style="left:172.0px;top:338.0px;height:24px;line-height:24px;font-size:19.00px;letter-spacing:-1.361px;color:#000;">Home</div>
<div class="t" style="left:172.0px;top:366.0px;height:24px;line-height:24px;font-size:19.00px;letter-spacing:-0.111px;color:#000;">Favourites</div>
<div class="t" style="left:172.0px;top:394.0px;height:24px;line-height:24px;font-size:19.00px;letter-spacing:1.561px;color:#000;">C:/</div>
<div class="t" style="left:172.0px;top:422.0px;height:24px;line-height:24px;font-size:19.00px;letter-spacing:1.561px;color:#000;">D:/</div>
<div class="t" style="left:172.0px;top:450.0px;height:24px;line-height:24px;font-size:19.00px;letter-spacing:1.561px;color:#000;">H:/</div>
<div class="t" style="left:172.0px;top:478.0px;height:24px;line-height:24px;font-size:19.00px;letter-spacing:2.732px;color:#000;">I:/</div>
<div class="t" style="left:172.0px;top:506.0px;height:24px;line-height:24px;font-size:19.00px;letter-spacing:1.308px;color:#000;">M:/</div>
<div class="t" style="left:172.0px;top:534.0px;height:24px;line-height:24px;font-size:19.00px;letter-spacing:1.561px;color:#000;">R:/</div>
<div class="t" style="left:172.0px;top:562.0px;height:24px;line-height:24px;font-size:19.00px;letter-spacing:1.035px;color:#000;">S:/</div>
<div class="t" style="left:172.0px;top:590.0px;height:24px;line-height:24px;font-size:19.00px;letter-spacing:1.568px;color:#000;">Z:/</div>
<div class="t" style="left:172.0px;top:618.0px;height:24px;line-height:24px;font-size:19.00px;letter-spacing:-1.380px;color:#000;">MSSQL</div>
<div class="t" style="left:172.0px;top:646.0px;height:24px;line-height:24px;font-size:19.00px;letter-spacing:-0.392px;color:#000;">Oracle</div>
<div class="b" style="left:575.0px;top:334.0px;width:27.0px;height:338.0px;background:#f0f0f0 repeating-conic-gradient(#e2e2e2 0 25%,#fafafa 0 50%) 0 0/3px 3px"></div>
<div class="b" style="left:575.0px;top:335.0px;width:26.5px;height:26.0px;border:1.4px solid #9c9c9c;border-radius:4px;box-sizing:border-box;background:linear-gradient(90deg,#f6f6f6,#e3e3e3)"></div>
<svg class="a" style="left:582.2px;top:344.6px" width="12.0" height="6.8" viewBox="0 0 16 9"><path d="M0 9h16L8 0z" fill="#000"/></svg>
<div class="b" style="left:575.0px;top:363.0px;width:26.5px;height:166.0px;border:1.4px solid #9c9c9c;border-radius:4px;box-sizing:border-box;background:linear-gradient(90deg,#f6f6f6,#e3e3e3)"></div>
<div class="hv" style="left:581px;top:430px;height:32px;width:16px;transform:rotate(0deg)"></div>
<div class="b" style="left:575.0px;top:617.0px;width:26.5px;height:26.0px;border:1.4px solid #9c9c9c;border-radius:4px;box-sizing:border-box;background:linear-gradient(90deg,#f6f6f6,#e3e3e3)"></div>
<svg class="a" style="left:582.2px;top:626.6px" width="12.0" height="6.8" viewBox="0 0 16 9"><path d="M0 9h16L8 0z" fill="#000"/></svg>
<div class="b" style="left:575.0px;top:645.0px;width:26.5px;height:26.0px;border:1.4px solid #9c9c9c;border-radius:4px;box-sizing:border-box;background:linear-gradient(90deg,#f6f6f6,#e3e3e3)"></div>
<svg class="a" style="left:582.2px;top:655.1px" width="12.0" height="6.8" viewBox="0 0 16 9"><path d="M0 0h16L8 9z" fill="#000"/></svg>
<div class="hh" style="left:261.0px;top:676.7px;width:163.0px"></div>
<div class="hh" style="left:261.0px;top:1126.5px;width:163.0px"></div>
<div class="hh" style="left:96.0px;top:696.5px;width:167.6px"></div>
<div class="hh" style="left:382.0px;top:696.5px;width:166.0px"></div>
<div class="t" style="left:275.6px;top:690.0px;height:21px;line-height:21px;font-size:16.50px;letter-spacing:-0.174px;color:#000;">Layers Panel</div>
<div class="b" style="left:553.6px;top:689.0px;width:22.5px;height:23.0px;border:1.4px solid #7f7f7f;border-radius:4px;background:linear-gradient(#fdfdfd,#e4e4e4);box-sizing:border-box"></div>
<div class="b" style="left:580.0px;top:689.0px;width:22.5px;height:23.0px;border:1.4px solid #7f7f7f;border-radius:4px;background:linear-gradient(#fdfdfd,#e4e4e4);box-sizing:border-box"></div>
<svg class="a" style="left:553.6px;top:689.0px" width="23" height="23" viewBox="0 0 23 23"><path d="M9.5 5.5h8v7h-8zM9.5 7h8" fill="none" stroke="#111" stroke-width="1.8"/><path d="M5.5 10h8v7.5h-8z" fill="#f4f4f4" stroke="#111" stroke-width="1.8"/><path d="M5.5 11.4h8" stroke="#111" stroke-width="1.8"/></svg>
<svg class="a" style="left:580.0px;top:689.0px" width="23" height="23" viewBox="0 0 23 23"><path d="M5.5 5.5l12 12M17.5 5.5l-12 12" stroke="#111" stroke-width="2.4"/></svg>
<svg class="a" style="left:103.5px;top:732.0px;overflow:visible" width="30" height="30" viewBox="-1 -1 28 28"><path d="M9 1h5v5" fill="none" stroke="#888" stroke-width="1.2"/><rect x="1.5" y="9" width="14" height="15" fill="none" stroke="#888" stroke-width="1.2"/><rect x="5" y="5" width="14" height="15" fill="#eee" stroke="#888" stroke-width="1.2"/><path d="M11.500 1v12" stroke="#888" stroke-width="1.2"/><rect x="17" y="17" width="9" height="9" rx="2" fill="#7fb377"/><path d="M19 21.5h5M21.5 19v5" stroke="#fff" stroke-width="1.6"/></svg>
<svg class="a" style="left:151.0px;top:732.0px;overflow:visible" width="30" height="30" viewBox="-1 -1 28 28"><path d="M1 11c6-9 18-9 25 0-7 8-19 8-25 0z" fill="#f4f4f4" stroke="#aaa" stroke-width="1.2"/><circle cx="13" cy="10.500" r="4.5" fill="#6d97c4"/><circle cx="13" cy="10.500" r="2" fill="#223"/><path d="M22 20h8l-4 4.500z" fill="#000"/></svg>
<svg class="a" style="left:198.0px;top:732.0px;overflow:visible" width="30" height="30" viewBox="-1 -1 28 28"><path d="M1 2h23l-9 11v11l-5-3v-8z" fill="#6d97c4" stroke="#4a739f" stroke-width="1"/><path d="M1 2.5h23" stroke="#f4d734" stroke-width="3"/></svg>
<svg class="a" style="left:247.0px;top:732.0px;overflow:visible" width="30" height="30" viewBox="-1 -1 28 28"><text x="0" y="17" font-family="Liberation Serif,serif" font-size="26" fill="#999">ε</text><path d="M12 13h13l-4 5v7l-5-2v-5z" fill="#ccc" stroke="#bbb"/></svg>
<svg class="a" style="left:314.5px;top:732.0px;overflow:visible" width="30" height="30" viewBox="-1 -1 28 28"><path d="M3 5v17M3 8h5M3 15h5M3 22h5" stroke="#999" stroke-width="1" fill="none"/><rect x="7" y="6" width="4" height="4" fill="#f90"/><rect x="7" y="13" width="4" height="4" fill="#f90"/><rect x="1" y="3" width="4" height="4" fill="#ddd" stroke="#999" stroke-width=".6"/><path d="M18 25l8-10h-5V2h-6v13h-5z" fill="#4f7fb5" stroke="#3d5a78" stroke-width="1"/></svg>
<svg class="a" style="left:362.0px;top:732.0px;overflow:visible" width="30" height="30" viewBox="-1 -1 28 28"><path d="M3 5v17M3 8h5M3 15h5M3 22h5" stroke="#999" stroke-width="1" fill="none"/><rect x="7" y="13" width="4" height="4" fill="#f90"/><rect x="7" y="20" width="4" height="4" fill="#f90"/><rect x="1" y="3" width="4" height="4" fill="#ddd" stroke="#999" stroke-width=".6"/><path d="M18 1l8 10h-5v13h-6V11h-5z" fill="#4f7fb5" stroke="#3d5a78" stroke-width="1"/></svg>
<svg class="a" style="left:408.0px;top:732.0px;overflow:visible" width="30" height="30" viewBox="-1 -1 28 28"><rect x="1.5" y="1.5" width="19" height="19" fill="#f8f8f8" stroke="#777" stroke-width="1.4"/><rect x="16" y="17" width="10" height="8" rx="2" fill="#e8465a"/><path d="M18 21h6" stroke="#fff" stroke-width="1.8"/></svg>
<svg class="a" style="left:285.9px;top:741.7px" width="15.2" height="8.5" viewBox="0 0 16 9"><path d="M0 0h16L8 9z" fill="#8c8c8c"/></svg>
<div class="b" style="left:92.5px;top:786.5px;width:512.0px;height:337.0px;background:#fff;border:1.5px solid #a9a9a9;border-radius:3px;box-sizing:border-box"></div>
<svg class="a" style="left:94px;top:788px" width="480" height="120" viewBox="94 788 480 120"><path d="M113 810.7V888.4h17M118 803.7h12M147.500 815.7V860.4h17M147.500 832.0h17" fill="none" stroke="#9a9a9a" stroke-width="1.2" stroke-dasharray="1.5 2"/><rect x="104" y="796.2" width="13.500" height="13.500" fill="#fff" stroke="#8a8a8a" stroke-width="1.3"/><path d="M107 803.0h7.500" stroke="#444" stroke-width="1.3"/><rect x="136" y="793.2" width="21" height="21" fill="#fff" stroke="#b0b0b0" stroke-width="1.3"/><path d="M141 798.2l11 11M152 798.2l-11 11" stroke="#000" stroke-width="4"/><rect x="136" y="877.9" width="21" height="21" fill="#fff" stroke="#b0b0b0" stroke-width="1.3"/><path d="M141 882.9l11 11M152 882.9l-11 11" stroke="#000" stroke-width="4"/><g transform="translate(168.500,789.7)"><rect x="0" y="0" width="27.9" height="27.9" fill="#6d97c4"/><rect x="0" y="0" width="9.3" height="9.3" fill="#26405c"/><rect x="0" y="18.6" width="9.3" height="9.3" fill="#26405c"/><rect x="9.3" y="9.3" width="9.3" height="9.3" fill="#26405c"/><rect x="18.6" y="0" width="9.3" height="9.3" fill="#26405c"/><rect x="18.6" y="18.6" width="9.3" height="9.3" fill="#26405c"/></g><rect x="170" y="817.5" width="28" height="28" fill="#000"/><rect x="169" y="874.4" width="27" height="27" fill="#0fc08c" stroke="#3a8a70" stroke-width="1.2"/></svg>
<div class="t" style="left:207.0px;top:791.7px;height:26px;line-height:26px;font-size:20.00px;letter-spacing:1.034px;font-weight:bold;color:#000;text-decoration:underline;">w001001</div>
<div class="t" style="left:207.0px;top:821.0px;height:24px;line-height:24px;font-size:19.00px;letter-spacing:0.220px;color:#000;">64236.6</div>
<div class="t" style="left:207.0px;top:849.4px;height:24px;line-height:24px;font-size:19.00px;letter-spacing:-0.081px;color:#000;">201778</div>
<div class="t" style="left:207.0px;top:876.4px;height:26px;line-height:26px;font-size:20.00px;letter-spacing:0.544px;font-weight:bold;color:#000;">blockmap05</div>
<div class="hv" style="left:607px;top:800px;height:565px;width:7px"></div>
<div class="hh" style="left:96.0px;top:1147.0px;width:167.0px"></div>
<div class="hh" style="left:383.5px;top:1147.0px;width:164.5px"></div>
<div class="t" style="left:275.0px;top:1140.5px;height:21px;line-height:21px;font-size:16.50px;letter-spacing:-0.137px;color:#000;">Shortest path</div>
<div class="b" style="left:553.6px;top:1139.5px;width:22.5px;height:23.0px;border:1.4px solid #7f7f7f;border-radius:4px;background:linear-gradient(#fdfdfd,#e4e4e4);box-sizing:border-box"></div>
<div class="b" style="left:580.0px;top:1139.5px;width:22.5px;height:23.0px;border:1.4px solid #7f7f7f;border-radius:4px;background:linear-gradient(#fdfdfd,#e4e4e4);box-sizing:border-box"></div>
<svg class="a" style="left:553.6px;top:1139.5px" width="23" height="23" viewBox="0 0 23 23"><path d="M9.5 5.5h8v7h-8zM9.5 7h8" fill="none" stroke="#111" stroke-width="1.8"/><path d="M5.5 10h8v7.5h-8z" fill="#f4f4f4" stroke="#111" stroke-width="1.8"/><path d="M5.5 11.4h8" stroke="#111" stroke-width="1.8"/></svg>
<svg class="a" style="left:580.0px;top:1139.5px" width="23" height="23" viewBox="0 0 23 23"><path d="M5.5 5.5l12 12M17.5 5.5l-12 12" stroke="#111" stroke-width="2.4"/></svg>
<div class="t" style="left:106.0px;top:1187.0px;height:25px;line-height:25px;font-size:19.50px;letter-spacing:0.330px;color:#000;">Start</div>
<div class="b" style="left:107.0px;top:1222.0px;width:424.5px;height:34.0px;background:#fff;border:1.5px solid #b4b4b4;border-radius:4px;box-sizing:border-box"></div>
<div class="b" style="left:545.0px;top:1218.0px;width:44.5px;height:43.0px;background:linear-gradient(#f8f8f8,#e2e2e2);border:1.5px solid #a4a4a4;border-radius:4px;box-sizing:border-box"></div>
<div class="t" style="left:106.0px;top:1274.5px;height:25px;line-height:25px;font-size:19.50px;letter-spacing:-0.538px;color:#000;">Stop</div>
<div class="b" style="left:107.0px;top:1309.5px;width:424.5px;height:34.0px;background:#fff;border:1.5px solid #b4b4b4;border-radius:4px;box-sizing:border-box"></div>
<div class="b" style="left:545.0px;top:1306.0px;width:44.5px;height:42.5px;background:linear-gradient(#f8f8f8,#e2e2e2);border:1.5px solid #a4a4a4;border-radius:4px;box-sizing:border-box"></div>
<svg class="a" style="left:552.3px;top:1224.5px" width="30" height="30" viewBox="-15 -15 30 30"><path d="M0-14l2.500 9h-5zM0 14l2.500-9h-5zM-14 0l9 2.500v-5zM14 0l-9 2.500v-5z" fill="#3f88c9"/><path d="M0-14V14M-14 0H14" stroke="#3f88c9" stroke-width="1"/><circle r="3.2" fill="#e23a3a"/></svg>
<svg class="a" style="left:552.3px;top:1312.3px" width="30" height="30" viewBox="-15 -15 30 30"><path d="M0-14l2.500 9h-5zM0 14l2.500-9h-5zM-14 0l9 2.500v-5zM14 0l-9 2.500v-5z" fill="#3f88c9"/><path d="M0-14V14M-14 0H14" stroke="#3f88c9" stroke-width="1"/><circle r="3.2" fill="#e23a3a"/></svg>
<div class="t" style="left:106.0px;top:1367.0px;height:25px;line-height:25px;font-size:19.50px;letter-spacing:-0.336px;color:#000;">Criterion</div>
<div class="b" style="left:354.0px;top:1362.5px;width:235.5px;height:33.0px;background:linear-gradient(#f8f8f8,#e2e2e2);border:1.5px solid #a4a4a4;border-radius:4px;box-sizing:border-box"></div>
<div class="b" style="left:560.0px;top:1364.0px;width:1.5px;height:30.0px;background:#b4b4b4"></div>
<div class="t" style="left:361.0px;top:1367.0px;height:25px;line-height:25px;font-size:19.50px;letter-spacing:-0.329px;color:#000;">Length</div>
<svg class="a" style="left:568.6px;top:1375.4px" width="12.8" height="7.2" viewBox="0 0 16 9"><path d="M0 0h16L8 9z" fill="#000"/></svg>
<div class="t" style="left:106.0px;top:1414.5px;height:25px;line-height:25px;font-size:19.50px;letter-spacing:-0.529px;color:#000;">Length</div>
<div class="b" style="left:174.0px;top:1409.0px;width:415.5px;height:34.5px;background:#fff;border:1.5px solid #b4b4b4;border-radius:4px;box-sizing:border-box"></div>
<div class="t" style="left:106.0px;top:1461.5px;height:25px;line-height:25px;font-size:19.50px;letter-spacing:-1.704px;color:#000;">Time</div>
<div class="b" style="left:154.5px;top:1456.0px;width:435.0px;height:34.0px;background:#fff;border:1.5px solid #b4b4b4;border-radius:4px;box-sizing:border-box"></div>
<div class="b" style="left:107.0px;top:1507.5px;width:148.5px;height:38.5px;background:linear-gradient(#f8f8f8,#e2e2e2);border:1.5px solid #a4a4a4;border-radius:4px;box-sizing:border-box"></div>
<div class="t" style="left:141.0px;top:1515.0px;height:25px;line-height:25px;font-size:19.50px;letter-spacing:-0.600px;color:#000;">Calculate</div>
<div class="b" style="left:273.0px;top:1507.5px;width:150.5px;height:38.5px;background:linear-gradient(#f8f8f8,#e2e2e2);border:1.5px solid #a4a4a4;border-radius:4px;box-sizing:border-box"></div>
<div class="t" style="left:319.0px;top:1515.0px;height:25px;line-height:25px;font-size:19.50px;letter-spacing:0.028px;color:#000;">Export</div>
<div class="b" style="left:441.5px;top:1507.5px;width:148.0px;height:38.5px;background:linear-gradient(#f8f8f8,#e2e2e2);border:1.5px solid #a4a4a4;border-radius:4px;box-sizing:border-box"></div>
<div class="t" style="left:492.5px;top:1515.0px;height:25px;line-height:25px;font-size:19.50px;letter-spacing:-1.025px;color:#000;">Clear</div>
<div class="b" style="left:107.0px;top:1563.5px;width:482.5px;height:43.5px;background:linear-gradient(#f8f8f8,#e2e2e2);border:1.5px solid #a4a4a4;border-radius:4px;box-sizing:border-box"></div>
<div class="t" style="left:345.0px;top:1573.0px;height:25px;line-height:25px;font-size:19.50px;letter-spacing:-0.869px;color:#000;">Help</div>
<svg class="a" style="left:311px;top:1571px" width="30" height="30" viewBox="0 0 30 30"><rect x="3" y="3" width="24" height="24" rx="6" fill="#fff" stroke="#ddd"/><path d="M3 3l9 9M27 3l-9 9M3 27l9-9M27 27l-9-9" stroke="#e44" stroke-width="5"/><circle cx="15" cy="15" r="5" fill="#fff"/><g fill="#fff" stroke="#e44" stroke-width="1.2"><circle cx="3" cy="3" r="2"/><circle cx="27" cy="3" r="2"/><circle cx="3" cy="27" r="2"/><circle cx="27" cy="27" r="2"/></g></svg>
<div class="t" style="left:11.5px;top:1955.5px;height:24px;line-height:24px;font-size:18.50px;letter-spacing:0.129px;color:#000;">1 legend entries removed.</div>
<div class="t" style="left:770.5px;top:1956.0px;height:25px;line-height:25px;font-size:19.50px;letter-spacing:-0.433px;color:#000;">Coordinate</div>
<div class="b" style="left:871.0px;top:1950.5px;width:520.0px;height:33.0px;background:#fff;border:1.5px solid #b4b4b4;border-radius:4px;box-sizing:border-box"></div>
<div class="t" style="left:1060.0px;top:1956.5px;height:24px;line-height:24px;font-size:19.00px;letter-spacing:0.104px;color:#000;">790972,2976364</div>
<div class="b" style="left:1395.0px;top:1944.5px;width:35.0px;height:43.5px;background:linear-gradient(#f8f8f8,#e2e2e2);border:1.5px solid #a4a4a4;border-radius:4px;box-sizing:border-box"></div>
<svg class="a" style="left:1399px;top:1951px" width="28" height="32" viewBox="0 0 28 32"><ellipse cx="13" cy="16" rx="8" ry="13" transform="rotate(-25 13 16)" fill="#ddd" stroke="#222" stroke-width="2.4"/><path d="M4 8l18 14M9 4l5 14" stroke="#222" stroke-width="2"/><circle cx="17" cy="24" r="3" fill="#888" stroke="#222"/><path d="M20 8l6-5" stroke="#555" stroke-dasharray="2 1.500"/></svg>
<div class="t" style="left:1444.0px;top:1956.0px;height:25px;line-height:25px;font-size:19.50px;letter-spacing:-1.195px;color:#000;">Scale</div>
<div class="b" style="left:1505.5px;top:1949.0px;width:153.5px;height:34.0px;background:#fff;border:1.5px solid #b4b4b4;border-radius:4px;box-sizing:border-box"></div>
<div class="b" style="left:1632.0px;top:1950.0px;width:26.0px;height:32.0px;background:linear-gradient(#f8f8f8,#e2e2e2);border-left:1.4px solid #b4b4b4;border-radius:0 3px 3px 0"></div>
<div class="t" style="left:1514.0px;top:1956.5px;height:24px;line-height:24px;font-size:19.00px;letter-spacing:0.149px;color:#000;">1:43,008</div>
<svg class="a" style="left:1639.1px;top:1962.4px" width="12.8" height="7.2" viewBox="0 0 16 9"><path d="M0 0h16L8 9z" fill="#000"/></svg>
<div class="t" style="left:1674.7px;top:1956.0px;height:25px;line-height:25px;font-size:19.50px;letter-spacing:-0.047px;color:#000;">Rotation</div>
<div class="b" style="left:1765.5px;top:1946.5px;width:169.0px;height:41.5px;background:#fff;border:1.5px solid #b4b4b4;border-radius:4px;box-sizing:border-box"></div>
<div class="b" style="left:1907.5px;top:1948.0px;width:26.0px;height:39.0px;background:linear-gradient(#f8f8f8,#e2e2e2);border-left:1.4px solid #b4b4b4;border-radius:0 3px 3px 0"></div>
<div class="b" style="left:1907.5px;top:1967.0px;width:26.0px;height:1.2px;background:#b4b4b4"></div>
<div class="t" style="left:1772.0px;top:1956.5px;height:24px;line-height:24px;font-size:19.00px;letter-spacing:0.294px;color:#000;">0.0</div>
<svg class="a" style="left:1915.4px;top:1953.8px" width="11.2" height="6.3" viewBox="0 0 16 9"><path d="M0 9h16L8 0z" fill="#000"/></svg>
<svg class="a" style="left:1915.4px;top:1975.8px" width="11.2" height="6.3" viewBox="0 0 16 9"><path d="M0 0h16L8 9z" fill="#000"/></svg>
<svg class="a" style="left:1946px;top:1955px" width="23" height="23" viewBox="0 0 23 23"><rect x="1" y="1" width="21" height="21" fill="#fff" stroke="#b0b0b0" stroke-width="1.3"/><path d="M6 6l11 11M17 6l-11 11" stroke="#000" stroke-width="4"/></svg>
<div class="t" style="left:1976.5px;top:1955.0px;height:25px;line-height:25px;font-size:19.50px;letter-spacing:-0.492px;color:#000;">Render</div>
<div id="canvas"><svg class="a" style="left:-619.7px;top:-234.5px" width="2412" height="1992" viewBox="0 0 2412 1992">
<g fill="#33a02c" stroke="#111" stroke-width="1.3" stroke-linejoin="round">
<path d="M600.0 685.0L620.0 687.0L785.0 708.2L819.5 716.8L827.5 707.5L836.2 711.2L830.0 721.2L847.5 748.0L846.2 775.0L840.0 824.5L763.0 807.5L760.0 802.5L772.5 797.0L781.2 790.5L777.0 787.0L770.0 794.0L757.5 798.2L754.5 807.0L620.0 783.0L600.0 780.0Z"/>
<path d="M600.0 795.0L620.0 798.0L635.0 805.0L705.0 818.8L705.0 822.0L718.0 825.0L718.5 831.2L722.5 831.2L722.5 826.5L748.2 830.0L762.5 829.5L807.5 837.5L815.0 837.0L828.8 843.0L836.2 875.0L843.8 910.0L843.0 961.2L802.5 1045.0L776.2 1067.5L703.8 1052.0L672.5 1062.5L620.0 1085.5L600.0 1095.0Z"/>
<path d="M994.0 669.0L1019.0 661.5L1032.5 662.5L1032.5 670.0L1077.5 674.0L1131.0 694.0L1200.0 715.0L1230.0 720.0L1260.0 720.0L1295.0 705.0L1320.0 690.0L1360.0 662.5L1362.5 654.0L1390.0 639.0L1425.0 615.0L1450.0 580.0L1482.5 520.0L1487.5 455.0L1510.0 415.0L1531.0 364.0L1531.0 363.5L1582.5 371.5L1621.0 388.5L1646.0 397.5L1701.0 430.0L1711.0 430.0L1731.0 412.5L1761.0 382.5L1793.5 355.0L1811.0 352.5L1851.0 347.5L1881.0 357.5L1898.5 372.5L1903.5 395.0L1911.0 420.0L1931.0 445.0L1936.0 456.0L1956.0 461.0L1981.0 464.0L2001.0 454.0L2031.0 451.0L2061.0 456.0L2086.0 467.5L2097.0 485.0L2098.5 505.0L2091.0 530.0L2087.0 555.0L2096.0 580.0L2108.5 595.0L2112.0 615.0L2108.5 632.5L2096.0 640.0L2076.0 639.0L2046.0 634.0L2016.0 639.0L1981.0 651.0L1956.0 667.5L1941.0 685.0L1934.5 705.0L1937.0 725.0L1939.5 745.0L1933.5 747.5L1928.5 767.5L1947.0 777.5L1948.5 782.5L1903.5 851.0L1700.0 930.0L1656.0 1088.0L1657.0 1080.0L1611.0 1241.5L2033.5 1263.5L2116.0 1332.5L2178.5 1405.0L2207.5 1415.0L2205.5 1477.5L2186.0 1525.0L2128.5 1686.5L1873.5 1611.0L1821.0 1606.5L1791.0 1803.5L1746.0 1818.5L1481.0 1589.0L1361.0 1511.0L1237.5 1420.0L1290.0 1255.0L1267.5 1241.2L1265.0 1243.0L1273.8 1250.0L1263.8 1285.0L1200.0 1308.0L1175.5 1308.8L1170.0 1397.5L1081.2 1337.5L1096.2 1310.0L1036.2 1306.2L960.0 1258.8L952.5 1241.2L953.8 1236.2L897.5 1126.2L896.2 1122.5L877.5 1075.0L876.2 1067.5L880.0 1052.5L907.5 1000.0L915.0 980.0L918.8 970.0L935.0 981.2L938.8 977.5L930.0 956.2L942.5 953.8L922.5 940.0L928.8 910.0L932.5 802.5L937.5 755.0L955.0 700.0L992.5 680.0L993.8 668.8Z"/>
<path d="M600.0 1143.8L620.0 1145.0L642.5 1131.2L692.5 1117.5L751.2 1108.8L788.8 1132.5L796.2 1152.5L793.8 1157.5L807.5 1190.0L825.0 1273.8L851.2 1275.5L847.0 1307.5L842.5 1362.5L876.2 1355.5L860.0 1382.5L793.8 1502.0L785.0 1519.0L772.5 1547.5L750.0 1592.5L731.8 1625.0L710.0 1670.0L682.5 1730.0L676.2 1741.2L657.5 1751.2L653.0 1758.8L647.0 1758.8L641.2 1761.2L620.0 1770.0L600.0 1777.5Z"/>
<path d="M600.0 1790.0L620.0 1792.0L642.5 1781.2L647.0 1775.0L647.5 1762.5L652.5 1761.2L652.0 1766.2L655.0 1778.0L682.5 1776.2L695.0 1767.5L710.0 1736.2L757.5 1660.0L782.5 1620.0L812.5 1567.5L823.8 1540.0L835.0 1527.5L860.0 1517.5L885.0 1516.2L910.0 1522.5L935.0 1536.2L985.0 1562.5L991.2 1550.0L1041.2 1575.0L1033.8 1590.0L1082.5 1616.2L1090.0 1605.0L1135.0 1627.5L1342.5 1745.0L1452.5 1840.0L1130.0 1853.0L1060.0 1854.5L1057.5 1860.0L1026.2 1861.2L1023.8 1837.5L1022.5 1865.0L1010.0 1885.0L1005.0 1891.2L1010.0 1892.5L1005.0 1925.0L995.0 1940.0L995.0 1955.0L600.0 1955.0Z"/>
<path d="M1018.8 1891.2L1082.5 1890.0L1085.0 1897.5L1087.0 1955.0L1010.0 1955.0L1013.0 1925.0Z"/>
<path d="M1092.0 1889.5L1213.7 1886.7L1215.0 1960.0L1092.0 1960.0Z"/>
<path d="M1218.0 1887.5L1288.0 1885.5L1292.5 1890.0L1298.0 1892.5L1300.0 1905.0L1305.0 1908.8L1306.2 1955.0L1219.0 1955.0Z"/>
<path d="M1306.2 1885.8L1532.5 1880.8L1596.2 1937.5L1615.0 1955.0L1308.0 1955.0Z"/>
</g>
<g fill="none" stroke="#111" stroke-linecap="butt" stroke-linejoin="round">
<path stroke-width="3.30" d="M1288.0 930.4L1340.0 977.5M911.0 1847.7L863.5 1900.3M1249.2 898.0L1291.0 936.2"/>
<path stroke-width="3.30" d="M1044.0 1111.4L1071.4 1072.5L1098.2 1038.0M828.9 1587.7L810.2 1620.8M846.2 1600.7L826.0 1635.2M861.3 1643.9L847.6 1665.5M1022.4 1032.3L1046.9 1006.3M1220.5 898.0L1206.0 913.9L1175.8 948.4L1145.6 984.4L1108.1 1027.6L1096.6 1041.3M1263.1 845.9L1234.6 883.1L1219.9 901.2"/>
<path stroke-width="3.30" d="M1345.9 751.9L1345.8 752.0M1688.8 482.5L1717.5 483.8M1693.8 497.5L1710.0 491.2M780.0 1333.9L790.0 1337.5L795.5 1350.5M992.2 1112.8L1009.5 1122.9M996.5 1104.2L1013.8 1114.3M754.7 1244.9L766.2 1243.8M721.2 1271.1L727.4 1270.0L739.0 1262.7M725.4 1271.1L732.7 1280.5M736.9 1263.7L746.3 1276.3M704.4 1258.5L701.2 1263.7M775.7 1332.6L792.5 1341.0L795.6 1351.5M1033.4 1702.9L1026.2 1721.6M1021.9 1724.5L1034.9 1730.3L1046.4 1711.6"/>
<path stroke-width="3.40" d="M1351.2 749.1L1325.3 772.5L1311.5 791.5L1295.1 810.5M1354.7 799.3L1338.3 820.9L1326.2 839.9"/>
<path stroke-width="3.80" d="M1013.0 733.8L1055.0 732.5M1231.2 750.0L1231.4 752.0M1469.8 802.8L1489.8 791.8L1503.7 775.8L1509.7 775.8M1425.8 782.8L1430.8 800.8L1436.8 803.4L1446.8 800.8L1441.8 779.8M1358.9 709.9L1373.9 723.9M1339.9 739.9L1347.9 745.9M1369.9 723.9L1345.9 751.9M1665.0 550.0L1672.5 560.0L1690.0 565.0M1705.0 601.2L1702.5 622.5M1665.0 621.2L1682.5 613.8M1812.5 722.5L1805.0 740.0M1830.0 730.0L1822.5 752.5M1842.5 737.5L1835.0 760.0M1875.0 543.8L1911.2 568.8L1897.5 587.5L1842.5 590.0M1897.5 560.0L1872.5 587.5M1847.5 537.5L1857.5 535.0L1860.0 530.0M1180.0 1268.8L1200.0 1269.5L1232.5 1280.0M780.0 1675.0L768.7 1692.0M757.5 1662.5L772.5 1675.0M1083.5 1888.0L1085.0 1945.0M1109.4 1038.0L1121.8 1049.5L1163.6 1082.6L1176.5 1094.1M1018.7 1038.0L1018.8 1040.8L1020.7 1084.0L1022.4 1099.2M992.0 990.5L974.9 1018.5L949.7 1055.2L931.0 1089.1M992.0 1015.1L986.4 1025.0L966.3 1063.9M998.1 1038.0L979.9 1072.5M1015.2 1040.8L1006.6 1055.2L992.2 1080.4L972.0 1114.3M1020.3 1063.9L1006.6 1088.4L986.4 1122.9M1021.7 1096.3L1000.8 1130.1M1021.0 1063.9L1044.0 1038.0M1058.4 1120.0L1087.2 1085.5L1121.8 1049.5M1077.2 1130.1L1106.0 1095.6L1136.2 1061.0M1107.4 1148.8L1136.2 1114.3L1163.6 1082.6M1120.4 1102.8L1147.7 1072.5M1058.4 1120.0L1049.8 1140.2L1038.3 1156.0L1022.4 1182.0L1018.1 1191.3M1107.4 1148.8L1085.8 1182.0L1080.0 1191.3M1136.2 1164.7L1124.7 1182.0L1120.4 1191.3M1091.6 1138.8L1095.9 1131.6M735.3 1205.5L760.0 1203.4M730.6 1235.4L753.7 1242.2M722.7 1251.2L754.7 1262.7L765.2 1268.5M659.3 1155.7L693.9 1178.8L709.6 1189.3L717.0 1196.6L730.6 1216.6M656.1 1185.1L692.8 1201.9M656.1 1196.6L687.6 1215.5L701.2 1228.1L720.1 1244.9M625.7 1181.9L645.7 1208.2L678.2 1236.5L708.6 1261.6M616.3 1185.1L632.0 1211.3L638.3 1216.6M640.4 1166.2L656.1 1184.0M701.2 1184.0L692.8 1201.9L685.5 1215.5L678.2 1234.4L677.1 1244.9L676.1 1263.7M717.0 1196.6L701.2 1220.7L698.1 1227.0M677.1 1209.2L670.8 1227.0L668.7 1229.1M659.3 1155.7L657.2 1181.9L656.1 1207.1L655.1 1213.4M637.8 1216.6L638.8 1234.4L639.9 1255.4L641.5 1276.3L642.5 1286.8M651.9 1229.1L652.5 1255.4L653.0 1273.2M620.5 1233.3L651.9 1232.8M623.6 1258.0L651.9 1256.4L677.1 1258.5M631.0 1273.7L654.0 1273.2M676.1 1263.7L683.4 1269.0L694.9 1276.3M642.5 1292.1L645.7 1307.8L654.5 1322.0M655.1 1292.1L659.3 1303.6L656.3 1322.0M654.0 1318.3L668.7 1307.8M696.0 1282.6L708.6 1297.3L725.4 1313.0L734.8 1322.0M751.6 1279.5L727.4 1313.0L720.8 1322.0M750.5 1280.5L761.0 1290.0M708.6 1297.3L714.9 1286.8L721.2 1272.1M651.9 1229.1L659.3 1221.8M725.4 1424.9L733.7 1450.0M742.1 1438.5L749.5 1456.3M752.6 1443.7L758.9 1459.5M660.3 1445.8L679.2 1440.6M641.5 1338.9L645.7 1366.1M636.2 1338.9L643.6 1367.2M730.6 1483.6L756.8 1498.3L758.5 1502.0M665.6 1554.5L683.4 1546.1L694.9 1531.5M616.3 1513.6L636.2 1511.5M625.7 1594.4L623.6 1615.4L620.5 1636.3M769.9 1848.4L756.9 1864.3L742.5 1878.7L729.5 1891.6L710.8 1913.2L693.5 1934.9M801.6 1877.2L787.2 1891.6L772.8 1907.5L759.8 1921.9L745.4 1940.6M911.0 1880.8L859.2 1940.6M716.6 1847.0L736.7 1852.8M648.9 1875.8L679.1 1901.7L699.3 1920.4L719.5 1940.6M617.2 1854.2L638.8 1861.4M644.6 1898.8L679.1 1926.2L693.5 1940.6M808.7 1682.8L828.9 1695.7M798.6 1620.8L811.6 1632.3M817.4 1633.8L827.4 1643.9M992.2 788.6L995.8 833.2L998.6 876.4L1001.5 919.6L1003.7 949.9M997.2 860.6L1015.2 860.6M1000.1 903.8L1015.9 903.8M1026.0 962.8L1076.4 936.9M1093.7 1023.3L1113.9 1041.3M1019.5 1000.6L1044.7 980.1L1076.4 936.9L1082.2 934.0M1057.7 990.2L1096.6 945.6L1119.6 915.3M1039.0 1041.3L1075.0 1001.7L1113.9 958.5L1142.7 922.5L1162.8 896.6L1174.4 889.4M1193.1 905.2L1206.0 913.9M1162.8 939.8L1175.8 948.4M1132.6 975.8L1145.6 984.4M1093.7 1020.4L1108.1 1033.4M1015.9 975.8L1017.4 1006.0L1018.8 1041.3M1000.8 975.9L988.6 996.0M1010.9 981.8L988.6 1020.4M1016.6 1003.5L998.6 1034.9M1008.7 977.2L1007.3 991.6L1003.0 997.4M1000.8 976.0L974.9 1018.5L949.7 1055.2M1010.9 981.8L986.4 1025.0L966.3 1063.9M1016.7 1003.4L1000.8 1032.9L992.2 1049.5M1015.9 976.7L1017.4 997.6L1018.8 1040.8M1093.0 1022.8L1121.8 1049.5"/>
<path stroke-width="4.20" d="M703.8 882.5L710.0 888.8M686.2 905.0L695.0 910.0M675.0 920.0L682.5 926.2M643.8 905.0L668.8 898.8L676.2 903.8L671.2 915.0L675.0 920.0M620.0 937.5L635.0 967.5M620.0 923.8L642.5 942.5L657.5 952.5M620.0 763.8L685.0 778.0L753.8 796.2"/>
<path stroke-width="4.30" d="M989.5 749.5L992.5 786.2L993.0 792.0M991.2 766.2L1137.5 766.2M992.5 786.2L1077.5 786.2M1077.5 750.0L1078.4 792.0M1176.2 786.2L1179.0 792.0M1130.0 766.2L1196.2 766.2M1197.5 750.0L1197.5 785.0M1671.6 615.0L1629.6 638.0L1601.6 652.0L1555.7 673.9L1503.7 697.9L1479.8 709.9L1437.8 731.9L1397.9 751.9L1378.0 760.7M1523.7 683.9L1517.7 679.9L1429.8 656.0M1503.7 696.9L1421.8 672.9M1479.8 709.9L1411.8 689.9M1437.8 731.9L1423.8 715.9L1407.8 708.9M1423.8 715.9L1389.9 734.9M1397.9 751.9L1387.9 739.9M1599.7 653.0L1612.6 677.9M1555.7 673.9L1569.7 707.9M1577.7 705.5L1521.7 731.9M1511.7 717.9L1529.7 753.9M1503.7 697.9L1509.7 713.9M1479.8 709.9L1487.8 727.9L1521.7 795.8M1423.8 715.9L1441.8 743.9L1469.8 802.8M1387.9 739.9L1401.8 763.9L1407.8 790.8L1425.8 783.8M1493.8 747.9L1451.8 764.9M1503.7 765.9L1463.8 782.8M1551.7 760.9L1517.7 777.8M1560.7 777.8L1495.8 804.8M1535.7 759.9L1545.7 782.8M1360.9 659.0L1365.9 679.9L1358.9 709.9L1339.9 739.9L1329.9 752.0M1707.5 467.0L1722.5 480.0L1815.0 537.5M1693.8 502.5L1690.0 555.0L1690.0 605.0L1686.2 627.5M1742.5 537.5L1741.2 577.5M1746.2 582.5L1745.0 601.2M1588.8 487.5L1627.5 502.5L1693.8 502.5L1722.5 505.0L1776.2 536.2M1567.5 507.5L1665.0 550.0L1690.0 555.0L1827.5 570.0L1838.8 555.0M1567.5 520.0L1665.0 570.0L1690.0 572.5L1740.0 580.0L1792.5 583.0M1555.0 510.0L1607.5 570.0L1655.0 620.0M1612.5 571.2L1652.5 587.5L1690.0 595.0L1745.0 601.2L1765.0 600.0M1640.0 580.0L1667.5 615.0M1693.8 517.5L1740.0 537.5L1815.0 540.0L1837.5 550.0M1555.0 673.8L1600.0 652.5L1640.0 632.5L1665.0 630.0M1600.0 652.5L1612.5 677.5M1685.0 636.2L1705.0 652.5L1722.5 700.0M1683.8 663.8L1702.5 658.8L1750.0 635.0M1690.0 662.5L1707.5 702.5L1745.0 705.0L1780.0 650.0M1712.5 652.5L1902.5 747.5L1917.5 750.5M1715.0 675.0L1795.0 712.5L1847.5 764.0M1750.0 640.0L1817.5 671.2L1795.0 727.5M1865.0 730.0L1852.5 764.0M1795.0 727.5L1857.5 752.5M1917.5 435.0L1860.0 530.0L1825.0 580.0M1827.5 595.0L1807.5 612.5M1917.5 750.5L1940.0 747.0M1847.5 764.0L1856.0 771.0M1175.5 1190.0L1250.0 1233.8M1138.3 1190.0L1220.0 1236.2M1050.9 1190.0L1147.5 1246.2L1195.0 1247.5M1017.5 1192.5L1126.2 1258.8M1065.0 1220.0L1082.1 1190.0M1122.5 1222.5L1138.8 1200.0M1147.5 1200.0L1155.2 1190.0M1200.0 1268.8L1207.5 1252.5L1225.0 1222.5M970.6 1190.0L962.5 1205.0M1017.8 1190.0L1017.5 1192.5M776.0 1201.2L782.5 1201.2M780.0 1414.6L782.5 1415.0L785.0 1435.0L780.0 1435.6M965.0 1815.0L910.0 1880.7M965.0 1813.8L1006.2 1812.5M916.2 1768.0L965.0 1813.8M785.0 1615.0L792.0 1619.7M1215.8 1886.0L1217.0 1945.0M973.7 1017.5L992.0 1028.1M1008.9 1038.0L1057.4 1066.3L1154.9 1128.7M936.3 1048.7L1056.3 1120.0L1136.2 1164.7L1201.0 1201.4M980.7 1171.9L1003.7 1183.4M1049.8 1140.2L1136.2 1191.3M1020.0 1172.0L1051.2 1191.3M762.1 1216.6L756.8 1232.3L754.2 1250.1L754.7 1269.0L749.5 1279.5L735.8 1284.7L717.0 1286.8L709.6 1292.1L704.4 1303.6L697.4 1322.0M761.0 1290.0L739.6 1322.0M709.6 1411.2L756.8 1402.8L773.6 1399.7M720.1 1420.7L756.8 1414.4M674.0 1394.5L679.2 1403.9M702.3 1392.4L702.3 1401.8M717.0 1419.6L731.6 1429.1L758.9 1443.7L771.5 1454.2M683.4 1438.5L702.3 1445.8L714.9 1455.3M678.2 1466.8L704.4 1443.7L721.2 1424.9M688.6 1485.7L714.9 1464.7L733.7 1450.0L740.0 1442.7M676.3 1502.0L709.6 1475.2L735.8 1456.3L746.3 1450.0M715.6 1502.0L728.5 1483.6L751.6 1475.2L769.4 1470.0M689.7 1455.3L710.7 1475.2L725.4 1492.0L733.0 1502.0M704.4 1442.7L714.9 1455.3L725.4 1468.9L735.8 1481.5M631.0 1388.2L631.0 1414.4L629.9 1445.8M639.4 1414.4L639.9 1447.9L639.4 1472.1M616.3 1414.4L649.8 1412.8M623.6 1447.9L658.2 1447.4M628.9 1424.9L625.7 1445.8L616.3 1456.3M629.9 1472.1L631.4 1502.0M639.4 1472.1L640.9 1502.0M654.0 1472.1L655.6 1502.0M664.5 1475.2L672.6 1502.0M657.2 1434.3L677.1 1430.1L701.2 1420.7M669.8 1412.3L675.0 1431.2L681.3 1438.5M713.8 1335.7L723.3 1321.0M721.2 1343.1L736.9 1322.1M727.4 1348.3L744.2 1328.4M761.0 1472.1L771.5 1479.4L773.5 1502.0M697.0 1499.0L708.6 1514.7L721.2 1531.5M731.6 1499.0L748.4 1513.6M696.0 1530.4L707.5 1513.6L721.2 1499.0M653.0 1568.2L668.7 1560.8L693.9 1545.1L720.1 1530.4L748.4 1513.6L756.8 1499.0M677.1 1569.2L702.3 1549.3L708.6 1544.0M638.3 1510.5L636.2 1531.5L627.8 1554.5M656.1 1506.3L659.3 1531.5L664.5 1555.6M616.3 1531.5L628.9 1522.0M627.8 1569.2L624.7 1594.4L618.4 1615.4M616.3 1613.3L641.5 1614.3L660.3 1622.7M792.0 1701.4L778.5 1727.4L759.8 1757.7L739.6 1793.7L726.7 1816.7L716.6 1842.7L699.3 1864.3L677.7 1890.2L650.3 1919.0L638.8 1940.6M780.0 1728.9L792.0 1735.8M768.4 1746.2L788.6 1757.7L792.0 1759.4M640.2 1822.5L671.9 1831.1M646.0 1842.7L682.0 1854.2L702.2 1858.5L729.5 1868.6M769.9 1848.4L801.6 1877.2L834.7 1903.2L863.5 1932.0L872.1 1940.6M756.9 1864.3L788.6 1891.6L818.8 1919.0L840.4 1940.6M735.3 1871.5L742.5 1878.7L772.8 1907.5L808.8 1940.6M687.8 1857.1L729.5 1891.6L759.8 1921.9L778.5 1940.6M617.2 1883.7L640.2 1891.6M762.7 1688.6L765.6 1698.6M836.8 1594.9L817.4 1632.3M854.8 1606.4L831.8 1649.6M861.3 1619.4L839.0 1658.3M905.2 1757.6L919.6 1771.3M788.6 1756.9L803.0 1764.9M1013.8 788.6L1014.5 833.2L1015.6 890.8L1016.6 947.0M990.0 807.3L1162.8 808.0M1079.3 788.6L1079.3 807.3M1132.6 788.6L1132.6 807.3M1015.9 837.5L1064.9 813.0L1076.4 808.0M1016.6 859.1L1115.3 811.6L1119.6 808.7M1017.1 882.2L1162.8 808.0L1202.0 789.8M1017.4 902.3L1134.0 847.6L1202.0 812.8M1018.1 922.5L1134.0 866.3L1202.0 834.4M1018.8 944.1L1134.0 889.4L1202.0 856.6M1023.1 958.5L1119.6 915.3L1172.9 889.4M1018.8 808.7L1031.8 830.3L1047.6 862.0L1064.9 896.6L1082.2 934.0L1096.6 945.6L1113.9 958.5L1132.6 975.8L1145.6 984.4M1076.4 808.7L1090.8 836.1L1105.2 864.9L1119.6 893.7L1128.3 912.4L1142.7 922.5L1162.8 939.8L1175.8 948.4M1132.6 808.7L1145.6 834.6L1160.0 862.0L1172.9 889.4L1180.1 898.0L1193.1 905.2L1204.6 913.9M1178.7 792.9L1191.6 817.4L1202.0 837.0M1014.5 964.3L1014.3 967.4L1013.7 970.4L1012.8 972.9L1011.6 974.9L1010.2 976.1L1008.7 976.5L1007.2 976.1L1005.8 974.9L1004.7 972.9L1003.7 970.4L1003.2 967.4L1003.0 964.3L1003.2 961.1L1003.7 958.2L1004.7 955.6L1005.8 953.7L1007.2 952.5L1008.7 952.0L1010.2 952.5L1011.6 953.7L1012.8 955.6L1013.7 958.2L1014.3 961.1L1014.5 964.3M973.7 1017.5L1057.4 1066.3L1154.9 1128.7M936.3 1048.7L1000.8 1086.9M1199.1 809.2L1239.8 791.5L1244.1 788.9M1199.1 828.2L1251.0 805.3L1276.0 793.2M1199.1 848.1L1208.6 845.1L1253.6 826.0L1257.0 823.5M1199.1 871.0L1215.6 864.9M1240.6 790.6L1251.8 805.3L1257.0 817.4L1262.2 819.1M1199.1 831.2L1208.6 845.1L1217.3 863.2M1372.8 810.5L1360.7 821.7M1321.0 846.8L1305.4 863.2M1333.1 858.0L1317.5 874.4M1341.7 844.2L1337.4 850.2M1357.3 858.0L1351.2 864.1M1346.9 870.1L1341.7 875.3M1338.3 784.6L1353.8 777.7M1341.7 795.8L1358.1 786.3M1221.6 877.0L1251.0 901.2M1132.5 750.0L1132.5 788.0"/>
<path stroke-width="4.60" d="M737.4 1184.0L735.8 1202.9L730.6 1223.9L723.3 1242.8L709.6 1262.7L693.9 1284.7L675.0 1307.8"/>
<path stroke-width="4.70" d="M651.2 848.8L647.5 901.2M668.8 848.8L661.2 903.8M620.0 830.0L622.0 814.5L654.5 820.5L650.0 848.0M663.8 847.5L668.0 825.5L696.2 831.5L692.0 848.0M720.0 860.0L703.8 882.5L686.2 905.0L675.0 920.0M653.8 920.0L661.2 910.0L682.5 926.2M762.5 895.0L727.5 915.0L697.5 940.0L683.8 951.2L693.8 966.2M697.5 940.0L711.2 951.2"/>
<path stroke-width="4.80" d="M989.5 750.0L1137.5 750.0M1130.0 750.0L1230.0 750.0M1130.0 785.0L1202.0 785.0M1590.0 446.2L1640.0 447.5L1702.5 465.0L1725.0 466.2L1752.5 477.5L1840.0 527.5L1847.5 537.5L1842.5 556.2M1098.6 1190.0L1150.0 1220.0L1195.0 1247.5L1230.0 1266.2M645.0 1942.0L645.0 1950.0M977.8 1121.5L966.3 1137.3L978.5 1143.1M1019.5 1141.6L999.4 1182.0L1005.1 1185.6M980.7 1171.9L967.7 1191.3M772.5 1388.2L777.8 1413.3M761.0 1414.4L783.0 1412.3M782.0 1412.3L786.7 1434.8L766.2 1439.5M674.0 1394.5L702.3 1392.4L713.8 1388.2M708.6 1435.4L735.8 1449.0L770.4 1464.7M616.3 1472.6L660.3 1471.0M616.3 1390.3L642.5 1388.2M635.2 1338.9L651.9 1326.3M676.1 1502.1L696.0 1530.4L714.9 1557.7M616.3 1507.9L675.0 1504.2M645.7 1571.3L642.5 1604.9L635.2 1646.8L633.1 1669.9M616.3 1593.9L645.7 1601.7L669.2 1604.3M616.3 1636.3L654.0 1645.2M767.3 1525.2L783.0 1533.6M729.5 1733.2L759.1 1756.5M818.8 1579.1L797.2 1619.4M833.2 1553.1L826.0 1567.5M821.0 1653.9L811.6 1668.4L800.1 1690.0L788.6 1707.2M939.8 1708.7L919.6 1734.6M916.7 1740.4L903.8 1757.6M788.6 1733.9L808.7 1746.1M1380.6 763.0L1359.9 771.6M1229.8 749.1L1232.0 784.6M1368.5 796.7L1377.2 815.7M1360.7 773.3L1364.2 782.0"/>
<path stroke-width="5.10" d="M740.0 1177.8L745.3 1162.5M765.2 1201.9L784.1 1200.3"/>
<path stroke-width="5.20" d="M740.0 856.2L746.2 872.5L760.0 895.0L770.0 903.8L786.2 923.8M727.5 915.0L740.0 927.0M740.0 927.0L773.8 965.0M717.5 951.2L765.0 1001.2"/>
<path stroke-width="5.30" d="M1586.2 374.5L1550.0 430.0L1500.0 505.0L1467.5 560.0L1436.2 626.2M952.1 1768.0L935.0 1787.5L910.0 1816.9M913.0 1080.4L1019.5 1141.6L1085.8 1182.0L1101.6 1191.3M616.3 1282.6L631.0 1297.3M672.9 1360.7L714.9 1356.9L734.8 1358.0M649.8 1412.3L696.0 1402.8L751.6 1392.4L776.7 1385.0M697.0 1403.9L699.1 1414.4L704.4 1428.0L708.6 1435.4M773.6 1517.8L788.3 1524.1M911.0 1815.3L833.2 1903.2L818.8 1920.4L803.0 1940.6M901.6 1696.4L889.4 1710.1L880.7 1721.6M1199.1 785.3L1277.8 785.4L1286.4 791.5M1353.8 777.7L1358.1 786.3"/>
<path stroke-width="5.70" d="M620.0 840.5L642.5 848.8L705.0 848.8L720.0 858.8L731.2 865.5M620.0 892.5L643.8 905.0L653.8 923.8L663.8 952.5M746.2 867.5L770.0 848.0L800.5 880.0L770.0 903.8L740.0 927.0L713.8 950.0L685.0 977.5L666.2 955.0M620.0 991.2L628.8 1010.0L623.8 1027.5L617.5 1032.5"/>
<path stroke-width="5.80" d="M1013.0 750.0L1013.4 792.0M782.5 1617.5L792.0 1624.6M936.7 1048.0L913.0 1080.4M1022.4 1099.2L1057.0 1066.7L1080.2 1038.0M694.9 1325.2L683.4 1341.0L674.0 1358.8L645.7 1373.5M678.2 1592.3L668.7 1615.4L659.3 1641.6L649.8 1673.0M616.3 1667.8L648.8 1678.3M719.1 1558.7L746.3 1592.8M617.2 1834.0L628.7 1848.4L646.0 1865.7L679.1 1890.2L696.4 1906.0L710.8 1917.6L736.7 1940.6M1202.0 892.8L1191.6 905.2L1162.8 939.8L1132.6 975.8L1093.7 1020.4L1076.4 1041.3"/>
<path stroke-width="6.00" d="M616.3 1185.1L639.4 1165.2L654.0 1151.5L660.3 1148.9L672.9 1151.5L699.1 1159.9L725.4 1170.4L740.0 1178.8L751.6 1187.2L761.0 1198.7L766.2 1211.3L769.4 1234.4L770.4 1265.8L771.5 1297.3L773.5 1322.0"/>
<path stroke-width="6.70" d="M648.8 1319.0L664.5 1335.7L677.1 1347.3M737.9 1356.7L741.1 1346.2L749.5 1333.6L765.2 1326.3L774.6 1319.0M677.1 1577.6L714.9 1558.2L762.1 1530.4L773.6 1517.8L774.1 1499.0M824.6 1544.5L869.2 1576.2L879.3 1583.4L903.8 1592.0L913.9 1609.3L936.9 1643.9M1018.8 962.8L1044.7 980.1L1056.3 991.6M1299.4 823.5L1277.8 833.0L1260.5 842.5L1243.2 853.7L1228.5 864.9L1217.3 875.3"/>
<path stroke-width="7.00" d="M1327.0 749.1L1303.7 775.9L1283.0 803.6L1269.1 819.1L1253.6 833.0L1225.9 862.3L1213.0 875.3L1199.1 892.6"/>
<path stroke-width="7.10" d="M754.5 829.5L740.0 852.5L708.8 895.0L685.0 924.5L663.8 952.5L635.0 977.5L620.0 991.2L605.0 1002.5"/>
<path stroke-width="7.20" d="M1013.0 662.5L1013.0 750.0M1840.0 582.0L1868.0 560.0L1890.0 535.0L1915.0 500.0L1930.0 470.0M1930.0 470.0L1936.0 456.0M953.1 1768.0L1000.0 1810.0L1062.5 1858.8M770.0 1645.0L792.0 1658.8M616.3 1305.7L631.0 1297.3L643.6 1290.0L654.0 1291.0L665.6 1299.4L675.0 1307.8L685.5 1318.3L690.5 1322.0M621.5 1319.0L634.1 1338.9L640.4 1361.9L645.7 1382.9L649.8 1409.1L654.0 1430.1L658.2 1454.2L664.5 1464.7L675.0 1475.2L689.7 1492.0L698.3 1502.0M690.7 1319.0L697.0 1327.3L720.1 1347.3L735.8 1357.8L745.3 1372.4L751.6 1385.0L756.8 1393.4L761.0 1414.4L764.2 1430.1L767.3 1440.6L773.6 1456.3L774.6 1472.1L776.7 1502.0M616.3 1554.5L628.9 1565.0L651.9 1568.2L668.7 1574.5L675.0 1582.8M646.0 1782.2L643.1 1805.2L641.0 1834.0L642.4 1862.8L644.6 1898.8L644.6 1940.6M936.9 1643.9L1003.2 1685.6L1078.1 1724.5M788.6 1653.2L811.6 1668.4L868.5 1706.5"/>
<path stroke-width="7.70" d="M675.0 1582.8L701.2 1604.9L731.6 1624.3M788.6 1625.9L821.7 1652.5L847.6 1668.4L870.7 1692.8L889.4 1710.1L916.7 1736.0L952.8 1764.9L960.0 1771.3M1056.3 991.6L1093.7 1023.3M1355.5 766.4L1329.6 788.0L1312.3 796.7L1295.1 812.2"/>
<path stroke-width="8.10" d="M784.8 922.0L787.8 925.5M772.2 963.2L775.2 966.8M764.0 999.5L767.0 1003.0"/>
<path stroke-width="8.20" d="M1685.0 633.5L1750.0 610.0L1815.0 588.0L1840.0 582.0M1010.0 1887.5L1015.0 1892.5L1008.8 1925.0L1000.0 1940.0M1293.3 820.9L1321.0 841.6L1346.9 862.3L1360.7 878.8"/>
<path stroke-width="9.20" d="M1378.0 780.5L1449.8 747.9L1509.7 717.9L1569.7 689.9L1629.6 660.0L1669.6 640.0L1685.0 633.5M1380.6 780.2L1358.1 792.3L1329.6 808.8L1299.4 823.5"/>
<path stroke-width="9.70" d="M811.6 1569.0L849.8 1589.9"/>
</g>
<g fill="#fff" stroke="#111" stroke-width="1.3" stroke-linejoin="round"><path d="M1617.0 386.2L1587.5 437.5L1551.2 501.2L1521.2 546.2L1502.5 566.2L1480.0 580.0L1457.5 592.5L1440.0 607.5L1436.8 620.0L1419.8 642.0L1385.9 693.9L1373.9 723.9L1357.9 759.9L1350.9 773.8L1353.9 777.8L1369.9 757.9L1387.9 731.9L1405.8 703.9L1407.8 691.9L1417.8 670.0L1429.8 652.0L1447.8 620.0L1446.2 613.8L1463.8 598.0L1486.2 585.0L1507.5 571.2L1526.2 551.2L1556.2 505.0L1592.5 442.5L1622.5 388.0Z"/><path d="M1147.5 1246.2L1195.0 1247.5L1202.5 1251.2L1182.5 1250.0Z"/><path d="M620.0 1770.0L641.2 1761.2L647.0 1758.8L645.0 1765.0L647.5 1775.0L642.5 1781.2L620.0 1792.0L600.0 1797.5L600.0 1775.0Z"/><path d="M719.1 1269.0L722.7 1273.2L718.0 1278.4Z"/><path d="M655.1 1449.0L659.3 1471.0L675.0 1468.9L664.5 1458.4Z"/><path d="M668.7 1573.4L683.4 1567.1L689.7 1583.9L681.3 1594.4L672.9 1590.2Z"/><path d="M628.9 1521.5L637.5 1517.8L636.2 1530.4Z"/><path d="M618.6 1834.0L630.2 1847.0L641.7 1860.0L641.0 1867.2L628.7 1860.0L618.6 1855.6Z"/><path d="M882.2 1604.3L917.5 1621.5L938.4 1643.9L932.6 1646.7L877.1 1611.5Z"/><path d="M1003.2 1688.5L993.1 1707.2L1021.9 1724.5L1026.2 1711.6L1011.8 1702.9L1019.0 1694.3Z"/><path d="M1015.2 949.9L1021.0 962.8L1044.7 978.7L1041.9 983.0L1018.8 970.0L1014.5 977.2L1015.6 962.8Z"/><path d="M1282.1 806.2L1299.4 815.7L1308.0 827.8L1295.1 832.1L1283.0 826.0L1277.8 815.7Z"/><path d="M1301.1 839.0L1304.6 841.6L1295.1 866.7L1282.1 884.8L1265.7 901.2L1251.8 901.2L1269.1 879.6L1282.1 858.0L1291.6 845.9Z"/></g>
<g fill="none" stroke="#fff" stroke-linecap="square" stroke-linejoin="round">
<path stroke-width="0.80" d="M1288.0 930.4L1340.0 977.5M911.0 1847.7L863.5 1900.3M1249.2 898.0L1291.0 936.2"/>
<path stroke-width="0.80" d="M1044.0 1111.4L1071.4 1072.5L1098.2 1038.0M828.9 1587.7L810.2 1620.8M846.2 1600.7L826.0 1635.2M861.3 1643.9L847.6 1665.5M1022.4 1032.3L1046.9 1006.3M1220.5 898.0L1206.0 913.9L1175.8 948.4L1145.6 984.4L1108.1 1027.6L1096.6 1041.3M1263.1 845.9L1234.6 883.1L1219.9 901.2"/>
<path stroke-width="0.80" d="M1345.9 751.9L1345.8 752.0M1688.8 482.5L1717.5 483.8M1693.8 497.5L1710.0 491.2M780.0 1333.9L790.0 1337.5L795.5 1350.5M992.2 1112.8L1009.5 1122.9M996.5 1104.2L1013.8 1114.3M754.7 1244.9L766.2 1243.8M721.2 1271.1L727.4 1270.0L739.0 1262.7M725.4 1271.1L732.7 1280.5M736.9 1263.7L746.3 1276.3M704.4 1258.5L701.2 1263.7M775.7 1332.6L792.5 1341.0L795.6 1351.5M1033.4 1702.9L1026.2 1721.6M1021.9 1724.5L1034.9 1730.3L1046.4 1711.6"/>
<path stroke-width="0.90" d="M1351.2 749.1L1325.3 772.5L1311.5 791.5L1295.1 810.5M1354.7 799.3L1338.3 820.9L1326.2 839.9"/>
<path stroke-width="1.30" d="M1013.0 733.8L1055.0 732.5M1231.2 750.0L1231.4 752.0M1469.8 802.8L1489.8 791.8L1503.7 775.8L1509.7 775.8M1425.8 782.8L1430.8 800.8L1436.8 803.4L1446.8 800.8L1441.8 779.8M1358.9 709.9L1373.9 723.9M1339.9 739.9L1347.9 745.9M1369.9 723.9L1345.9 751.9M1665.0 550.0L1672.5 560.0L1690.0 565.0M1705.0 601.2L1702.5 622.5M1665.0 621.2L1682.5 613.8M1812.5 722.5L1805.0 740.0M1830.0 730.0L1822.5 752.5M1842.5 737.5L1835.0 760.0M1875.0 543.8L1911.2 568.8L1897.5 587.5L1842.5 590.0M1897.5 560.0L1872.5 587.5M1847.5 537.5L1857.5 535.0L1860.0 530.0M1180.0 1268.8L1200.0 1269.5L1232.5 1280.0M780.0 1675.0L768.7 1692.0M757.5 1662.5L772.5 1675.0M1083.5 1888.0L1085.0 1945.0M1109.4 1038.0L1121.8 1049.5L1163.6 1082.6L1176.5 1094.1M1018.7 1038.0L1018.8 1040.8L1020.7 1084.0L1022.4 1099.2M992.0 990.5L974.9 1018.5L949.7 1055.2L931.0 1089.1M992.0 1015.1L986.4 1025.0L966.3 1063.9M998.1 1038.0L979.9 1072.5M1015.2 1040.8L1006.6 1055.2L992.2 1080.4L972.0 1114.3M1020.3 1063.9L1006.6 1088.4L986.4 1122.9M1021.7 1096.3L1000.8 1130.1M1021.0 1063.9L1044.0 1038.0M1058.4 1120.0L1087.2 1085.5L1121.8 1049.5M1077.2 1130.1L1106.0 1095.6L1136.2 1061.0M1107.4 1148.8L1136.2 1114.3L1163.6 1082.6M1120.4 1102.8L1147.7 1072.5M1058.4 1120.0L1049.8 1140.2L1038.3 1156.0L1022.4 1182.0L1018.1 1191.3M1107.4 1148.8L1085.8 1182.0L1080.0 1191.3M1136.2 1164.7L1124.7 1182.0L1120.4 1191.3M1091.6 1138.8L1095.9 1131.6M735.3 1205.5L760.0 1203.4M730.6 1235.4L753.7 1242.2M722.7 1251.2L754.7 1262.7L765.2 1268.5M659.3 1155.7L693.9 1178.8L709.6 1189.3L717.0 1196.6L730.6 1216.6M656.1 1185.1L692.8 1201.9M656.1 1196.6L687.6 1215.5L701.2 1228.1L720.1 1244.9M625.7 1181.9L645.7 1208.2L678.2 1236.5L708.6 1261.6M616.3 1185.1L632.0 1211.3L638.3 1216.6M640.4 1166.2L656.1 1184.0M701.2 1184.0L692.8 1201.9L685.5 1215.5L678.2 1234.4L677.1 1244.9L676.1 1263.7M717.0 1196.6L701.2 1220.7L698.1 1227.0M677.1 1209.2L670.8 1227.0L668.7 1229.1M659.3 1155.7L657.2 1181.9L656.1 1207.1L655.1 1213.4M637.8 1216.6L638.8 1234.4L639.9 1255.4L641.5 1276.3L642.5 1286.8M651.9 1229.1L652.5 1255.4L653.0 1273.2M620.5 1233.3L651.9 1232.8M623.6 1258.0L651.9 1256.4L677.1 1258.5M631.0 1273.7L654.0 1273.2M676.1 1263.7L683.4 1269.0L694.9 1276.3M642.5 1292.1L645.7 1307.8L654.5 1322.0M655.1 1292.1L659.3 1303.6L656.3 1322.0M654.0 1318.3L668.7 1307.8M696.0 1282.6L708.6 1297.3L725.4 1313.0L734.8 1322.0M751.6 1279.5L727.4 1313.0L720.8 1322.0M750.5 1280.5L761.0 1290.0M708.6 1297.3L714.9 1286.8L721.2 1272.1M651.9 1229.1L659.3 1221.8M725.4 1424.9L733.7 1450.0M742.1 1438.5L749.5 1456.3M752.6 1443.7L758.9 1459.5M660.3 1445.8L679.2 1440.6M641.5 1338.9L645.7 1366.1M636.2 1338.9L643.6 1367.2M730.6 1483.6L756.8 1498.3L758.5 1502.0M665.6 1554.5L683.4 1546.1L694.9 1531.5M616.3 1513.6L636.2 1511.5M625.7 1594.4L623.6 1615.4L620.5 1636.3M769.9 1848.4L756.9 1864.3L742.5 1878.7L729.5 1891.6L710.8 1913.2L693.5 1934.9M801.6 1877.2L787.2 1891.6L772.8 1907.5L759.8 1921.9L745.4 1940.6M911.0 1880.8L859.2 1940.6M716.6 1847.0L736.7 1852.8M648.9 1875.8L679.1 1901.7L699.3 1920.4L719.5 1940.6M617.2 1854.2L638.8 1861.4M644.6 1898.8L679.1 1926.2L693.5 1940.6M808.7 1682.8L828.9 1695.7M798.6 1620.8L811.6 1632.3M817.4 1633.8L827.4 1643.9M992.2 788.6L995.8 833.2L998.6 876.4L1001.5 919.6L1003.7 949.9M997.2 860.6L1015.2 860.6M1000.1 903.8L1015.9 903.8M1026.0 962.8L1076.4 936.9M1093.7 1023.3L1113.9 1041.3M1019.5 1000.6L1044.7 980.1L1076.4 936.9L1082.2 934.0M1057.7 990.2L1096.6 945.6L1119.6 915.3M1039.0 1041.3L1075.0 1001.7L1113.9 958.5L1142.7 922.5L1162.8 896.6L1174.4 889.4M1193.1 905.2L1206.0 913.9M1162.8 939.8L1175.8 948.4M1132.6 975.8L1145.6 984.4M1093.7 1020.4L1108.1 1033.4M1015.9 975.8L1017.4 1006.0L1018.8 1041.3M1000.8 975.9L988.6 996.0M1010.9 981.8L988.6 1020.4M1016.6 1003.5L998.6 1034.9M1008.7 977.2L1007.3 991.6L1003.0 997.4M1000.8 976.0L974.9 1018.5L949.7 1055.2M1010.9 981.8L986.4 1025.0L966.3 1063.9M1016.7 1003.4L1000.8 1032.9L992.2 1049.5M1015.9 976.7L1017.4 997.6L1018.8 1040.8M1093.0 1022.8L1121.8 1049.5"/>
<path stroke-width="1.70" d="M703.8 882.5L710.0 888.8M686.2 905.0L695.0 910.0M675.0 920.0L682.5 926.2M643.8 905.0L668.8 898.8L676.2 903.8L671.2 915.0L675.0 920.0M620.0 937.5L635.0 967.5M620.0 923.8L642.5 942.5L657.5 952.5M620.0 763.8L685.0 778.0L753.8 796.2"/>
<path stroke-width="1.80" d="M989.5 749.5L992.5 786.2L993.0 792.0M991.2 766.2L1137.5 766.2M992.5 786.2L1077.5 786.2M1077.5 750.0L1078.4 792.0M1176.2 786.2L1179.0 792.0M1130.0 766.2L1196.2 766.2M1197.5 750.0L1197.5 785.0M1671.6 615.0L1629.6 638.0L1601.6 652.0L1555.7 673.9L1503.7 697.9L1479.8 709.9L1437.8 731.9L1397.9 751.9L1378.0 760.7M1523.7 683.9L1517.7 679.9L1429.8 656.0M1503.7 696.9L1421.8 672.9M1479.8 709.9L1411.8 689.9M1437.8 731.9L1423.8 715.9L1407.8 708.9M1423.8 715.9L1389.9 734.9M1397.9 751.9L1387.9 739.9M1599.7 653.0L1612.6 677.9M1555.7 673.9L1569.7 707.9M1577.7 705.5L1521.7 731.9M1511.7 717.9L1529.7 753.9M1503.7 697.9L1509.7 713.9M1479.8 709.9L1487.8 727.9L1521.7 795.8M1423.8 715.9L1441.8 743.9L1469.8 802.8M1387.9 739.9L1401.8 763.9L1407.8 790.8L1425.8 783.8M1493.8 747.9L1451.8 764.9M1503.7 765.9L1463.8 782.8M1551.7 760.9L1517.7 777.8M1560.7 777.8L1495.8 804.8M1535.7 759.9L1545.7 782.8M1360.9 659.0L1365.9 679.9L1358.9 709.9L1339.9 739.9L1329.9 752.0M1707.5 467.0L1722.5 480.0L1815.0 537.5M1693.8 502.5L1690.0 555.0L1690.0 605.0L1686.2 627.5M1742.5 537.5L1741.2 577.5M1746.2 582.5L1745.0 601.2M1588.8 487.5L1627.5 502.5L1693.8 502.5L1722.5 505.0L1776.2 536.2M1567.5 507.5L1665.0 550.0L1690.0 555.0L1827.5 570.0L1838.8 555.0M1567.5 520.0L1665.0 570.0L1690.0 572.5L1740.0 580.0L1792.5 583.0M1555.0 510.0L1607.5 570.0L1655.0 620.0M1612.5 571.2L1652.5 587.5L1690.0 595.0L1745.0 601.2L1765.0 600.0M1640.0 580.0L1667.5 615.0M1693.8 517.5L1740.0 537.5L1815.0 540.0L1837.5 550.0M1555.0 673.8L1600.0 652.5L1640.0 632.5L1665.0 630.0M1600.0 652.5L1612.5 677.5M1685.0 636.2L1705.0 652.5L1722.5 700.0M1683.8 663.8L1702.5 658.8L1750.0 635.0M1690.0 662.5L1707.5 702.5L1745.0 705.0L1780.0 650.0M1712.5 652.5L1902.5 747.5L1917.5 750.5M1715.0 675.0L1795.0 712.5L1847.5 764.0M1750.0 640.0L1817.5 671.2L1795.0 727.5M1865.0 730.0L1852.5 764.0M1795.0 727.5L1857.5 752.5M1917.5 435.0L1860.0 530.0L1825.0 580.0M1827.5 595.0L1807.5 612.5M1917.5 750.5L1940.0 747.0M1847.5 764.0L1856.0 771.0M1175.5 1190.0L1250.0 1233.8M1138.3 1190.0L1220.0 1236.2M1050.9 1190.0L1147.5 1246.2L1195.0 1247.5M1017.5 1192.5L1126.2 1258.8M1065.0 1220.0L1082.1 1190.0M1122.5 1222.5L1138.8 1200.0M1147.5 1200.0L1155.2 1190.0M1200.0 1268.8L1207.5 1252.5L1225.0 1222.5M970.6 1190.0L962.5 1205.0M1017.8 1190.0L1017.5 1192.5M776.0 1201.2L782.5 1201.2M780.0 1414.6L782.5 1415.0L785.0 1435.0L780.0 1435.6M965.0 1815.0L910.0 1880.7M965.0 1813.8L1006.2 1812.5M916.2 1768.0L965.0 1813.8M785.0 1615.0L792.0 1619.7M1215.8 1886.0L1217.0 1945.0M973.7 1017.5L992.0 1028.1M1008.9 1038.0L1057.4 1066.3L1154.9 1128.7M936.3 1048.7L1056.3 1120.0L1136.2 1164.7L1201.0 1201.4M980.7 1171.9L1003.7 1183.4M1049.8 1140.2L1136.2 1191.3M1020.0 1172.0L1051.2 1191.3M762.1 1216.6L756.8 1232.3L754.2 1250.1L754.7 1269.0L749.5 1279.5L735.8 1284.7L717.0 1286.8L709.6 1292.1L704.4 1303.6L697.4 1322.0M761.0 1290.0L739.6 1322.0M709.6 1411.2L756.8 1402.8L773.6 1399.7M720.1 1420.7L756.8 1414.4M674.0 1394.5L679.2 1403.9M702.3 1392.4L702.3 1401.8M717.0 1419.6L731.6 1429.1L758.9 1443.7L771.5 1454.2M683.4 1438.5L702.3 1445.8L714.9 1455.3M678.2 1466.8L704.4 1443.7L721.2 1424.9M688.6 1485.7L714.9 1464.7L733.7 1450.0L740.0 1442.7M676.3 1502.0L709.6 1475.2L735.8 1456.3L746.3 1450.0M715.6 1502.0L728.5 1483.6L751.6 1475.2L769.4 1470.0M689.7 1455.3L710.7 1475.2L725.4 1492.0L733.0 1502.0M704.4 1442.7L714.9 1455.3L725.4 1468.9L735.8 1481.5M631.0 1388.2L631.0 1414.4L629.9 1445.8M639.4 1414.4L639.9 1447.9L639.4 1472.1M616.3 1414.4L649.8 1412.8M623.6 1447.9L658.2 1447.4M628.9 1424.9L625.7 1445.8L616.3 1456.3M629.9 1472.1L631.4 1502.0M639.4 1472.1L640.9 1502.0M654.0 1472.1L655.6 1502.0M664.5 1475.2L672.6 1502.0M657.2 1434.3L677.1 1430.1L701.2 1420.7M669.8 1412.3L675.0 1431.2L681.3 1438.5M713.8 1335.7L723.3 1321.0M721.2 1343.1L736.9 1322.1M727.4 1348.3L744.2 1328.4M761.0 1472.1L771.5 1479.4L773.5 1502.0M697.0 1499.0L708.6 1514.7L721.2 1531.5M731.6 1499.0L748.4 1513.6M696.0 1530.4L707.5 1513.6L721.2 1499.0M653.0 1568.2L668.7 1560.8L693.9 1545.1L720.1 1530.4L748.4 1513.6L756.8 1499.0M677.1 1569.2L702.3 1549.3L708.6 1544.0M638.3 1510.5L636.2 1531.5L627.8 1554.5M656.1 1506.3L659.3 1531.5L664.5 1555.6M616.3 1531.5L628.9 1522.0M627.8 1569.2L624.7 1594.4L618.4 1615.4M616.3 1613.3L641.5 1614.3L660.3 1622.7M792.0 1701.4L778.5 1727.4L759.8 1757.7L739.6 1793.7L726.7 1816.7L716.6 1842.7L699.3 1864.3L677.7 1890.2L650.3 1919.0L638.8 1940.6M780.0 1728.9L792.0 1735.8M768.4 1746.2L788.6 1757.7L792.0 1759.4M640.2 1822.5L671.9 1831.1M646.0 1842.7L682.0 1854.2L702.2 1858.5L729.5 1868.6M769.9 1848.4L801.6 1877.2L834.7 1903.2L863.5 1932.0L872.1 1940.6M756.9 1864.3L788.6 1891.6L818.8 1919.0L840.4 1940.6M735.3 1871.5L742.5 1878.7L772.8 1907.5L808.8 1940.6M687.8 1857.1L729.5 1891.6L759.8 1921.9L778.5 1940.6M617.2 1883.7L640.2 1891.6M762.7 1688.6L765.6 1698.6M836.8 1594.9L817.4 1632.3M854.8 1606.4L831.8 1649.6M861.3 1619.4L839.0 1658.3M905.2 1757.6L919.6 1771.3M788.6 1756.9L803.0 1764.9M1013.8 788.6L1014.5 833.2L1015.6 890.8L1016.6 947.0M990.0 807.3L1162.8 808.0M1079.3 788.6L1079.3 807.3M1132.6 788.6L1132.6 807.3M1015.9 837.5L1064.9 813.0L1076.4 808.0M1016.6 859.1L1115.3 811.6L1119.6 808.7M1017.1 882.2L1162.8 808.0L1202.0 789.8M1017.4 902.3L1134.0 847.6L1202.0 812.8M1018.1 922.5L1134.0 866.3L1202.0 834.4M1018.8 944.1L1134.0 889.4L1202.0 856.6M1023.1 958.5L1119.6 915.3L1172.9 889.4M1018.8 808.7L1031.8 830.3L1047.6 862.0L1064.9 896.6L1082.2 934.0L1096.6 945.6L1113.9 958.5L1132.6 975.8L1145.6 984.4M1076.4 808.7L1090.8 836.1L1105.2 864.9L1119.6 893.7L1128.3 912.4L1142.7 922.5L1162.8 939.8L1175.8 948.4M1132.6 808.7L1145.6 834.6L1160.0 862.0L1172.9 889.4L1180.1 898.0L1193.1 905.2L1204.6 913.9M1178.7 792.9L1191.6 817.4L1202.0 837.0M1014.5 964.3L1014.3 967.4L1013.7 970.4L1012.8 972.9L1011.6 974.9L1010.2 976.1L1008.7 976.5L1007.2 976.1L1005.8 974.9L1004.7 972.9L1003.7 970.4L1003.2 967.4L1003.0 964.3L1003.2 961.1L1003.7 958.2L1004.7 955.6L1005.8 953.7L1007.2 952.5L1008.7 952.0L1010.2 952.5L1011.6 953.7L1012.8 955.6L1013.7 958.2L1014.3 961.1L1014.5 964.3M973.7 1017.5L1057.4 1066.3L1154.9 1128.7M936.3 1048.7L1000.8 1086.9M1199.1 809.2L1239.8 791.5L1244.1 788.9M1199.1 828.2L1251.0 805.3L1276.0 793.2M1199.1 848.1L1208.6 845.1L1253.6 826.0L1257.0 823.5M1199.1 871.0L1215.6 864.9M1240.6 790.6L1251.8 805.3L1257.0 817.4L1262.2 819.1M1199.1 831.2L1208.6 845.1L1217.3 863.2M1372.8 810.5L1360.7 821.7M1321.0 846.8L1305.4 863.2M1333.1 858.0L1317.5 874.4M1341.7 844.2L1337.4 850.2M1357.3 858.0L1351.2 864.1M1346.9 870.1L1341.7 875.3M1338.3 784.6L1353.8 777.7M1341.7 795.8L1358.1 786.3M1221.6 877.0L1251.0 901.2M1132.5 750.0L1132.5 788.0"/>
<path stroke-width="2.10" d="M737.4 1184.0L735.8 1202.9L730.6 1223.9L723.3 1242.8L709.6 1262.7L693.9 1284.7L675.0 1307.8"/>
<path stroke-width="2.20" d="M651.2 848.8L647.5 901.2M668.8 848.8L661.2 903.8M620.0 830.0L622.0 814.5L654.5 820.5L650.0 848.0M663.8 847.5L668.0 825.5L696.2 831.5L692.0 848.0M720.0 860.0L703.8 882.5L686.2 905.0L675.0 920.0M653.8 920.0L661.2 910.0L682.5 926.2M762.5 895.0L727.5 915.0L697.5 940.0L683.8 951.2L693.8 966.2M697.5 940.0L711.2 951.2"/>
<path stroke-width="2.30" d="M989.5 750.0L1137.5 750.0M1130.0 750.0L1230.0 750.0M1130.0 785.0L1202.0 785.0M1590.0 446.2L1640.0 447.5L1702.5 465.0L1725.0 466.2L1752.5 477.5L1840.0 527.5L1847.5 537.5L1842.5 556.2M1098.6 1190.0L1150.0 1220.0L1195.0 1247.5L1230.0 1266.2M645.0 1942.0L645.0 1950.0M977.8 1121.5L966.3 1137.3L978.5 1143.1M1019.5 1141.6L999.4 1182.0L1005.1 1185.6M980.7 1171.9L967.7 1191.3M772.5 1388.2L777.8 1413.3M761.0 1414.4L783.0 1412.3M782.0 1412.3L786.7 1434.8L766.2 1439.5M674.0 1394.5L702.3 1392.4L713.8 1388.2M708.6 1435.4L735.8 1449.0L770.4 1464.7M616.3 1472.6L660.3 1471.0M616.3 1390.3L642.5 1388.2M635.2 1338.9L651.9 1326.3M676.1 1502.1L696.0 1530.4L714.9 1557.7M616.3 1507.9L675.0 1504.2M645.7 1571.3L642.5 1604.9L635.2 1646.8L633.1 1669.9M616.3 1593.9L645.7 1601.7L669.2 1604.3M616.3 1636.3L654.0 1645.2M767.3 1525.2L783.0 1533.6M729.5 1733.2L759.1 1756.5M818.8 1579.1L797.2 1619.4M833.2 1553.1L826.0 1567.5M821.0 1653.9L811.6 1668.4L800.1 1690.0L788.6 1707.2M939.8 1708.7L919.6 1734.6M916.7 1740.4L903.8 1757.6M788.6 1733.9L808.7 1746.1M1380.6 763.0L1359.9 771.6M1229.8 749.1L1232.0 784.6M1368.5 796.7L1377.2 815.7M1360.7 773.3L1364.2 782.0"/>
<path stroke-width="2.60" d="M740.0 1177.8L745.3 1162.5M765.2 1201.9L784.1 1200.3"/>
<path stroke-width="2.70" d="M740.0 856.2L746.2 872.5L760.0 895.0L770.0 903.8L786.2 923.8M727.5 915.0L740.0 927.0M740.0 927.0L773.8 965.0M717.5 951.2L765.0 1001.2"/>
<path stroke-width="2.80" d="M1586.2 374.5L1550.0 430.0L1500.0 505.0L1467.5 560.0L1436.2 626.2M952.1 1768.0L935.0 1787.5L910.0 1816.9M913.0 1080.4L1019.5 1141.6L1085.8 1182.0L1101.6 1191.3M616.3 1282.6L631.0 1297.3M672.9 1360.7L714.9 1356.9L734.8 1358.0M649.8 1412.3L696.0 1402.8L751.6 1392.4L776.7 1385.0M697.0 1403.9L699.1 1414.4L704.4 1428.0L708.6 1435.4M773.6 1517.8L788.3 1524.1M911.0 1815.3L833.2 1903.2L818.8 1920.4L803.0 1940.6M901.6 1696.4L889.4 1710.1L880.7 1721.6M1199.1 785.3L1277.8 785.4L1286.4 791.5M1353.8 777.7L1358.1 786.3"/>
<path stroke-width="3.20" d="M620.0 840.5L642.5 848.8L705.0 848.8L720.0 858.8L731.2 865.5M620.0 892.5L643.8 905.0L653.8 923.8L663.8 952.5M746.2 867.5L770.0 848.0L800.5 880.0L770.0 903.8L740.0 927.0L713.8 950.0L685.0 977.5L666.2 955.0M620.0 991.2L628.8 1010.0L623.8 1027.5L617.5 1032.5"/>
<path stroke-width="3.30" d="M1013.0 750.0L1013.4 792.0M782.5 1617.5L792.0 1624.6M936.7 1048.0L913.0 1080.4M1022.4 1099.2L1057.0 1066.7L1080.2 1038.0M694.9 1325.2L683.4 1341.0L674.0 1358.8L645.7 1373.5M678.2 1592.3L668.7 1615.4L659.3 1641.6L649.8 1673.0M616.3 1667.8L648.8 1678.3M719.1 1558.7L746.3 1592.8M617.2 1834.0L628.7 1848.4L646.0 1865.7L679.1 1890.2L696.4 1906.0L710.8 1917.6L736.7 1940.6M1202.0 892.8L1191.6 905.2L1162.8 939.8L1132.6 975.8L1093.7 1020.4L1076.4 1041.3"/>
<path stroke-width="3.50" d="M616.3 1185.1L639.4 1165.2L654.0 1151.5L660.3 1148.9L672.9 1151.5L699.1 1159.9L725.4 1170.4L740.0 1178.8L751.6 1187.2L761.0 1198.7L766.2 1211.3L769.4 1234.4L770.4 1265.8L771.5 1297.3L773.5 1322.0"/>
<path stroke-width="4.20" d="M648.8 1319.0L664.5 1335.7L677.1 1347.3M737.9 1356.7L741.1 1346.2L749.5 1333.6L765.2 1326.3L774.6 1319.0M677.1 1577.6L714.9 1558.2L762.1 1530.4L773.6 1517.8L774.1 1499.0M824.6 1544.5L869.2 1576.2L879.3 1583.4L903.8 1592.0L913.9 1609.3L936.9 1643.9M1018.8 962.8L1044.7 980.1L1056.3 991.6M1299.4 823.5L1277.8 833.0L1260.5 842.5L1243.2 853.7L1228.5 864.9L1217.3 875.3"/>
<path stroke-width="4.50" d="M1327.0 749.1L1303.7 775.9L1283.0 803.6L1269.1 819.1L1253.6 833.0L1225.9 862.3L1213.0 875.3L1199.1 892.6"/>
<path stroke-width="4.60" d="M754.5 829.5L740.0 852.5L708.8 895.0L685.0 924.5L663.8 952.5L635.0 977.5L620.0 991.2L605.0 1002.5"/>
<path stroke-width="4.70" d="M1013.0 662.5L1013.0 750.0M1840.0 582.0L1868.0 560.0L1890.0 535.0L1915.0 500.0L1930.0 470.0M1930.0 470.0L1936.0 456.0M953.1 1768.0L1000.0 1810.0L1062.5 1858.8M770.0 1645.0L792.0 1658.8M616.3 1305.7L631.0 1297.3L643.6 1290.0L654.0 1291.0L665.6 1299.4L675.0 1307.8L685.5 1318.3L690.5 1322.0M621.5 1319.0L634.1 1338.9L640.4 1361.9L645.7 1382.9L649.8 1409.1L654.0 1430.1L658.2 1454.2L664.5 1464.7L675.0 1475.2L689.7 1492.0L698.3 1502.0M690.7 1319.0L697.0 1327.3L720.1 1347.3L735.8 1357.8L745.3 1372.4L751.6 1385.0L756.8 1393.4L761.0 1414.4L764.2 1430.1L767.3 1440.6L773.6 1456.3L774.6 1472.1L776.7 1502.0M616.3 1554.5L628.9 1565.0L651.9 1568.2L668.7 1574.5L675.0 1582.8M646.0 1782.2L643.1 1805.2L641.0 1834.0L642.4 1862.8L644.6 1898.8L644.6 1940.6M936.9 1643.9L1003.2 1685.6L1078.1 1724.5M788.6 1653.2L811.6 1668.4L868.5 1706.5"/>
<path stroke-width="5.20" d="M675.0 1582.8L701.2 1604.9L731.6 1624.3M788.6 1625.9L821.7 1652.5L847.6 1668.4L870.7 1692.8L889.4 1710.1L916.7 1736.0L952.8 1764.9L960.0 1771.3M1056.3 991.6L1093.7 1023.3M1355.5 766.4L1329.6 788.0L1312.3 796.7L1295.1 812.2"/>
<path stroke-width="5.60" d="M784.8 922.0L787.8 925.5M772.2 963.2L775.2 966.8M764.0 999.5L767.0 1003.0"/>
<path stroke-width="5.70" d="M1685.0 633.5L1750.0 610.0L1815.0 588.0L1840.0 582.0M1010.0 1887.5L1015.0 1892.5L1008.8 1925.0L1000.0 1940.0M1293.3 820.9L1321.0 841.6L1346.9 862.3L1360.7 878.8"/>
<path stroke-width="6.70" d="M1378.0 780.5L1449.8 747.9L1509.7 717.9L1569.7 689.9L1629.6 660.0L1669.6 640.0L1685.0 633.5M1380.6 780.2L1358.1 792.3L1329.6 808.8L1299.4 823.5"/>
<path stroke-width="7.20" d="M811.6 1569.0L849.8 1589.9"/>
</g>
<g fill="#fff" stroke="none"><path d="M1617.0 386.2L1587.5 437.5L1551.2 501.2L1521.2 546.2L1502.5 566.2L1480.0 580.0L1457.5 592.5L1440.0 607.5L1436.8 620.0L1419.8 642.0L1385.9 693.9L1373.9 723.9L1357.9 759.9L1350.9 773.8L1353.9 777.8L1369.9 757.9L1387.9 731.9L1405.8 703.9L1407.8 691.9L1417.8 670.0L1429.8 652.0L1447.8 620.0L1446.2 613.8L1463.8 598.0L1486.2 585.0L1507.5 571.2L1526.2 551.2L1556.2 505.0L1592.5 442.5L1622.5 388.0Z"/><path d="M1147.5 1246.2L1195.0 1247.5L1202.5 1251.2L1182.5 1250.0Z"/><path d="M620.0 1770.0L641.2 1761.2L647.0 1758.8L645.0 1765.0L647.5 1775.0L642.5 1781.2L620.0 1792.0L600.0 1797.5L600.0 1775.0Z"/><path d="M719.1 1269.0L722.7 1273.2L718.0 1278.4Z"/><path d="M655.1 1449.0L659.3 1471.0L675.0 1468.9L664.5 1458.4Z"/><path d="M668.7 1573.4L683.4 1567.1L689.7 1583.9L681.3 1594.4L672.9 1590.2Z"/><path d="M628.9 1521.5L637.5 1517.8L636.2 1530.4Z"/><path d="M618.6 1834.0L630.2 1847.0L641.7 1860.0L641.0 1867.2L628.7 1860.0L618.6 1855.6Z"/><path d="M882.2 1604.3L917.5 1621.5L938.4 1643.9L932.6 1646.7L877.1 1611.5Z"/><path d="M1003.2 1688.5L993.1 1707.2L1021.9 1724.5L1026.2 1711.6L1011.8 1702.9L1019.0 1694.3Z"/><path d="M1015.2 949.9L1021.0 962.8L1044.7 978.7L1041.9 983.0L1018.8 970.0L1014.5 977.2L1015.6 962.8Z"/><path d="M1282.1 806.2L1299.4 815.7L1308.0 827.8L1295.1 832.1L1283.0 826.0L1277.8 815.7Z"/><path d="M1301.1 839.0L1304.6 841.6L1295.1 866.7L1282.1 884.8L1265.7 901.2L1251.8 901.2L1269.1 879.6L1282.1 858.0L1291.6 845.9Z"/></g>
<g fill="none" stroke="#1c1c1c">
<path stroke-width="1.00" d="M663.8 958.8L712.5 1021.2L715.0 1022.5L743.8 1060.0M628.8 1027.5L678.8 1058.0M932.5 802.5L990.0 799.5M928.8 910.0L992.0 908.2M1131.2 693.8L1131.2 748.0M1126.2 1260.0L1096.2 1310.0M793.8 1157.5L776.0 1171.6M807.5 1191.2L782.5 1196.2M776.0 1267.7L800.0 1269.5L825.0 1273.8M776.0 1303.4L810.0 1317.5L847.0 1307.5M796.2 1351.2L842.5 1340.0M780.0 1396.2L860.0 1382.5M838.8 1411.2L845.0 1411.2M910.0 1778.6L917.5 1770.0"/>
<path stroke-width="1.20" d="M1025.8 1190.0L1052.5 1200.0L1056.2 1212.5M1107.5 1230.0L1122.5 1240.0L1120.0 1247.5M947.5 1780.0L972.5 1802.5M941.8 954.4L989.3 980.3M756.8 1187.2L792.5 1157.8M784.1 1200.3L806.1 1191.4M773.6 1266.9L798.8 1269.5L822.9 1272.1M774.6 1303.6L809.2 1317.2L830.0 1312.0M795.6 1351.5L830.0 1343.1M778.8 1396.6L830.0 1387.1M659.3 1326.3L672.9 1344.1M941.8 954.4L989.3 980.3"/>
<path stroke-width="1.30" d="M1121.8 1153.2L1143.4 1127.2M943.2 1104.2L914.4 1153.2M941.8 1133.7L921.6 1164.7M1058.4 1069.6L1065.6 1073.9L1056.3 1085.5L1052.7 1082.6M850.5 1592.0L877.9 1610.7M990.0 908.1L997.2 908.1"/>
<path stroke-width="1.40" d="M1384.9 690.9L1377.9 708.9M775.6 1753.4L741.1 1819.6L729.5 1815.3M736.7 1772.1L716.6 1812.4L736.7 1821.1M736.7 1852.8L755.5 1829.7M897.2 1768.0L804.4 1875.8L818.8 1884.4L911.0 1779.3M859.2 1813.9L886.5 1835.5M732.4 1870.0L671.9 1940.6M736.7 1872.9L677.7 1940.6M653.2 1847.0L679.1 1870.0L696.4 1883.0M657.5 1852.8L653.2 1858.5M690.7 1877.2L710.8 1894.5M710.8 1867.2L725.2 1881.6M739.6 1890.2L759.8 1907.5M722.3 1906.0L739.6 1923.3M754.0 1903.2L759.8 1906.0M743.9 1914.7L751.1 1920.4M768.4 1914.7L781.4 1923.3M648.9 1874.4L651.8 1878.7M647.4 1881.6L667.6 1901.7M670.5 1903.2L684.9 1916.1M653.2 1920.4L670.5 1934.9M693.5 1916.1L699.3 1923.3M725.2 1914.7L729.5 1920.4M628.7 1847.0L638.8 1855.6M935.5 1649.6L928.3 1664.0L919.6 1671.2L893.7 1677.0L880.7 1694.3L902.3 1688.5L912.4 1684.2L913.9 1681.3L893.7 1687.1M864.9 1727.4L883.6 1721.6L875.0 1733.2L902.3 1757.6M935.5 1535.8L923.9 1556.0M967.2 1756.2L958.5 1766.3M850.5 1620.8L857.7 1620.8M820.2 1662.6L836.1 1672.7M939.8 1707.2L944.1 1714.4M801.5 1617.9L808.7 1612.2"/>
<path stroke-width="1.50" d="M1493.8 800.8L1504.7 819.8M1622.5 492.5L1622.5 501.2M1663.8 492.5L1663.8 501.2M1757.5 485.0L1743.8 508.8M1803.8 512.5L1798.8 522.5M1772.5 551.2L1772.5 563.8M1596.2 493.8L1588.8 511.2M921.2 1835.0L910.0 1848.0M910.0 1848.6L921.2 1835.0M978.5 1146.0L972.0 1156.0M657.2 1323.1L677.1 1339.9"/>
<path stroke-width="1.60" d="M1075.4 1038.0L1077.2 1040.8M983.5 1040.8L992.2 1046.6M986.4 1032.2L989.3 1049.5M957.6 1053.8L964.8 1049.5M1022.4 1049.5L1029.6 1043.7M1026.7 1084.0L1033.9 1089.8M1023.9 1078.3L1029.6 1092.7M1052.7 1078.3L1059.9 1084.0M969.1 1062.4L977.8 1066.7M1059.9 1125.8L1070.0 1127.2M1087.2 1164.7L1093.0 1173.3M1104.5 1156.0L1110.3 1170.4M1054.1 1150.3L1071.4 1158.9L1068.5 1164.7M735.3 1212.4L758.9 1208.2M735.3 1219.7L758.9 1215.0M735.3 1227.0L758.9 1222.8M821.0 1548.1L813.0 1563.2M824.6 1549.9L816.6 1565.0M828.2 1551.7L820.2 1566.8M1023.1 795.8L1027.4 800.1L1033.2 800.8M1144.1 801.5L1144.8 805.8M1043.3 833.2L1047.6 840.4M1047.6 833.2L1051.9 839.7M1024.6 844.7L1031.8 841.9M1003.0 864.9L1003.0 876.4M1021.0 883.6L1023.1 893.7L1027.4 890.8M1043.3 870.7L1049.1 876.4M1044.7 893.7L1047.6 898.0M1099.5 890.8L1105.2 892.3M1105.2 903.8L1108.1 909.5M1109.5 859.1L1112.4 864.9M1138.4 851.9L1144.1 850.5L1145.6 854.8M1175.8 846.2L1180.1 851.9M1177.2 844.7L1184.4 849.1M1180.1 831.8L1181.6 837.5M1181.6 864.9L1184.4 863.5M1160.0 877.9L1162.8 876.4M1123.9 885.1L1126.8 889.4M1128.3 899.5L1136.9 896.6L1139.8 902.3M1119.6 909.5L1123.9 908.1M1062.0 926.8L1067.8 923.9L1070.7 929.7M1031.8 928.3L1034.6 934.0M1039.0 947.0L1041.9 952.8M1053.4 952.8L1059.1 958.5M1070.7 952.8L1073.5 957.1M1093.7 951.3L1099.5 960.0M1096.6 952.8L1102.3 961.4M1099.5 928.3L1109.5 923.9M1060.6 975.8L1064.9 978.7M1021.7 977.2L1024.6 981.6M1096.6 997.4L1105.2 1004.6M1100.9 994.5L1109.5 1001.7M1105.2 991.6L1112.4 998.8M1108.1 1014.7L1115.3 1008.9M1067.8 1029.1L1076.4 1034.9M1073.5 1026.2L1082.2 1023.3M1162.8 923.9L1168.6 928.3M1188.8 918.2L1191.6 922.5M1112.4 962.8L1115.3 965.7M1023.1 1004.6L1027.4 1008.9M1294.2 838.1L1283.8 855.4M1293.3 839.0L1283.0 856.3M1225.9 871.0L1244.1 854.6L1244.9 857.2L1229.4 875.3L1225.9 871.0M1208.6 816.5L1210.4 821.7M1232.0 816.5L1236.3 821.7M1206.9 839.9L1210.4 838.1M1234.6 847.6L1238.0 845.9M1239.8 840.7L1240.2 842.5M1316.7 766.4L1325.3 773.3M1289.9 808.8L1299.4 803.6L1294.2 811.4L1289.9 808.8M1304.6 823.5L1315.8 817.4L1311.5 827.8L1304.6 823.5M1220.7 887.4L1225.1 883.1M1340.0 821.7L1342.6 823.5M1200.0 752.6L1226.8 752.6L1228.5 782.8"/>
<path stroke-width="1.70" d="M668.7 1161.0L672.9 1156.8M685.5 1169.4L689.7 1163.1M693.9 1174.6L700.2 1166.2M704.4 1179.8L707.5 1171.5M710.7 1184.0L718.0 1174.6M719.1 1190.3L725.4 1181.9M723.3 1194.5L731.6 1185.1M687.6 1190.3L693.9 1181.9M683.4 1205.0L687.6 1198.7M702.3 1198.7L710.7 1202.9M704.4 1202.9L706.5 1198.7M675.0 1221.8L681.3 1223.9M664.5 1233.3L672.9 1230.2M664.5 1240.7L675.0 1240.7M664.5 1247.0L675.0 1248.0M656.1 1260.6L675.0 1262.7M656.1 1266.9L672.9 1270.0M658.2 1273.2L670.8 1278.4M628.9 1221.8L629.9 1255.4M629.9 1255.4L635.2 1272.1M645.7 1263.7L645.7 1274.2M641.5 1240.7L644.6 1240.7L644.6 1244.9M704.4 1247.0L710.7 1243.8M691.8 1262.7L698.1 1269.0M698.1 1258.5L704.4 1262.7M677.1 1288.9L683.4 1292.1M683.4 1297.3L691.8 1297.3M683.4 1303.6L689.7 1301.5M729.5 1285.8L729.5 1299.4M746.3 1194.5L750.5 1192.4M748.4 1217.6L748.4 1221.8L758.9 1217.6M729.5 1242.8L731.6 1240.7M761.0 1262.7L765.2 1261.6M730.6 1318.3L742.1 1303.6M704.4 1307.8L708.6 1305.7M634.1 1207.1L637.3 1212.4M620.5 1205.0L624.7 1202.9M720.1 1255.4L722.2 1265.8M712.8 1263.7L719.1 1266.9M646.7 1280.5L658.2 1286.8L668.7 1280.5M644.6 1300.4L659.3 1312.0M644.6 1333.6L654.0 1341.0L660.3 1359.8M649.8 1341.0L659.3 1346.2M678.2 1396.6L699.1 1395.5M683.4 1399.7L696.0 1397.6M706.5 1395.5L714.9 1394.5M725.4 1401.8L727.4 1410.2M645.7 1419.6L647.8 1433.3L651.9 1433.3M660.3 1440.6L677.1 1436.4M662.4 1443.7L675.0 1440.6M681.3 1431.2L697.0 1427.0M683.4 1434.3L702.3 1430.1M733.7 1422.8L742.1 1425.9M749.5 1424.9L750.5 1435.4M754.7 1422.8L756.8 1435.4M729.5 1441.6L735.8 1445.8M744.2 1445.8L746.3 1454.2M750.5 1447.9L756.8 1451.1M712.8 1458.4L715.9 1466.8M730.6 1466.8L742.1 1460.5M735.8 1472.1L744.2 1470.0M623.6 1464.7L623.6 1470.0M620.5 1434.3L623.6 1434.3M762.1 1480.4L772.5 1480.4M720.1 1354.6L724.3 1356.2M632.0 1416.5L641.5 1416.0M624.7 1451.1L636.2 1452.1M677.1 1424.9L696.0 1420.7M662.4 1531.5L675.0 1530.4L687.6 1525.2M647.8 1535.7L647.8 1544.0M647.8 1536.2L655.1 1535.7M646.7 1552.4L656.1 1551.4M702.3 1524.1L713.8 1534.6M722.2 1536.7L726.4 1544.0M748.4 1517.8L756.8 1525.2M628.9 1615.4L624.7 1634.2M646.7 1619.5L648.8 1630.0L644.6 1636.3M622.6 1653.1L628.9 1654.2M621.5 1657.3L627.8 1659.4M654.0 1573.4L664.5 1567.1L666.6 1561.9"/>
<path stroke-width="1.80" d="M774.8 1319.0L775.3 1363.0"/>
</g>
</svg></div>
<div class="b" style="left:2037.0px;top:1917.5px;width:281.0px;height:72.0px;border:5px solid #ed1c24;box-sizing:border-box;background:linear-gradient(#fff 0,#fff 16px,#f0f0f0 16px)"></div>
<svg class="a" style="left:2140px;top:1780px" width="84" height="124" viewBox="2140 1780 84 124"><path d="M2165 1787h33v52.500h14l-30.500 56.500-30.500-56.500h14z" fill="#ed1c24" stroke="#ed1c24" stroke-width="2" stroke-linejoin="round"/></svg>
<svg class="a" style="left:2070px;top:1953px" width="29" height="29" viewBox="0 0 29 29"><circle cx="14.500" cy="14.500" r="12.500" fill="#e8e8e8" stroke="#222" stroke-width="2.6"/><ellipse cx="14.500" cy="14.500" rx="6" ry="12.500" fill="none" stroke="#333" stroke-width="2"/><ellipse cx="14.500" cy="14.500" rx="12.500" ry="6" fill="none" stroke="#333" stroke-width="2"/></svg>
<div class="t" style="left:2104.5px;top:1956.0px;height:25px;line-height:25px;font-size:19.50px;letter-spacing:-0.785px;color:#000;">USER:100001 (OTF)</div>
<svg class="a" style="left:2318px;top:1954px" width="28" height="28" viewBox="0 0 28 28"><path d="M14 2c7 0 12 4 12 10s-5 10-12 10l-2 0 5 5c-5 0-8-2-9-6-4-2-6-5-6-9C2 6 7 2 14 2z" fill="#777"/><g fill="#fff"><circle cx="8" cy="12" r="1.800"/><circle cx="14" cy="12" r="1.800"/><circle cx="20" cy="12" r="1.800"/></g></svg>
<svg class="a" style="left:2376px;top:1964px" width="28" height="28" viewBox="0 0 28 28"><path d="M2 28L28 2M10 28L28 10M18 28L28 18" stroke="#b8b8b8" stroke-width="2.4"/></svg>
<div id="winedge"></div>
</body></html>
